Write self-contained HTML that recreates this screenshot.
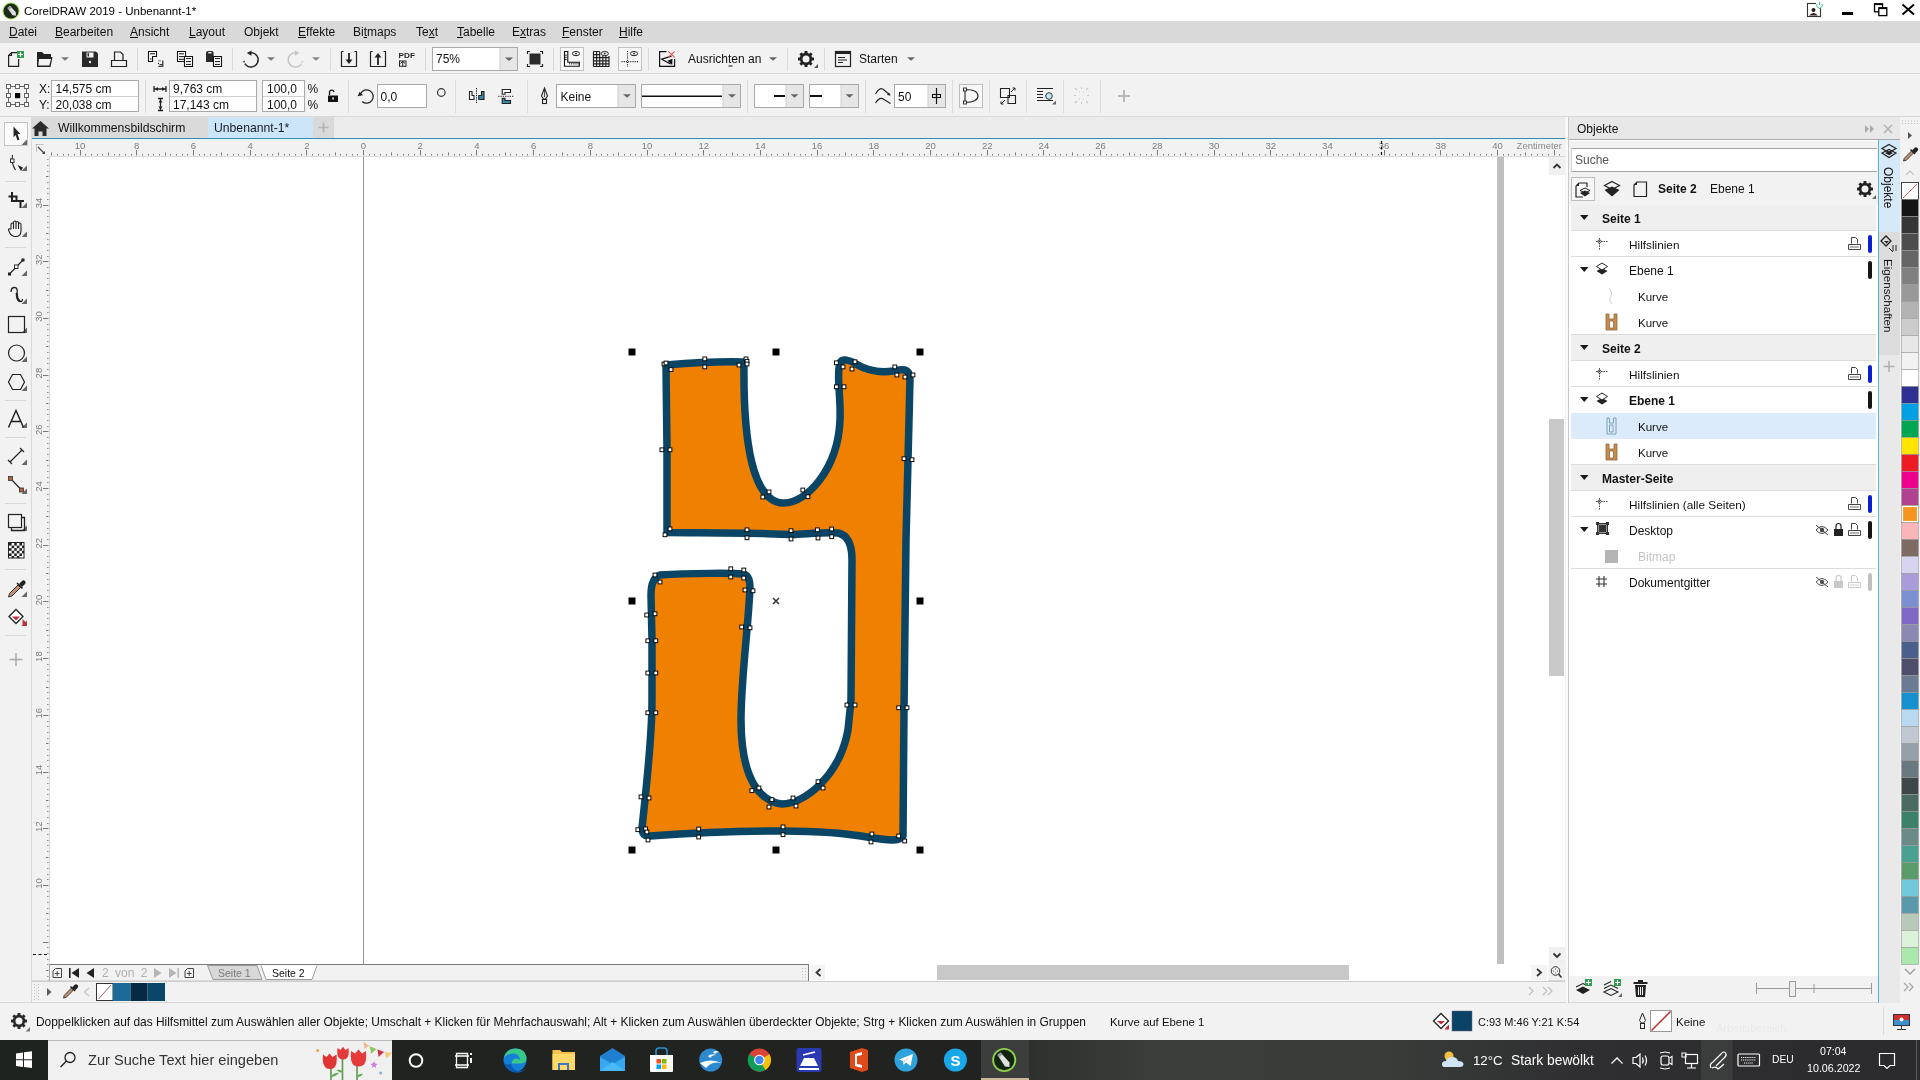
<!DOCTYPE html>
<html><head><meta charset="utf-8">
<style>
*{margin:0;padding:0;box-sizing:border-box}
html,body{width:1920px;height:1080px;overflow:hidden;background:#f2f2f2;font-family:"Liberation Sans",sans-serif;color:#1a1a1a}
.a{position:absolute}
svg{will-change:transform}
.t{position:absolute;white-space:nowrap;font-size:12px;line-height:14px;will-change:transform}
</style></head><body>
<!-- TITLE BAR -->
<div class="a" style="left:0;top:0;width:1920px;height:21px;background:#fff"></div>
<!-- MENU BAR -->
<div class="a" style="left:0;top:21px;width:1920px;height:22px;background:#d9d9d9"></div>
<!-- STANDARD TOOLBAR -->
<div class="a" style="left:0;top:43px;width:1920px;height:31px;background:#f2f2f2;border-bottom:1px solid #d6d6d6"></div>
<!-- PROPERTY BAR -->
<div class="a" style="left:0;top:74px;width:1920px;height:43px;background:#f2f2f2;border-bottom:1px solid #d9d9d9"></div>
<!-- TOOLBOX -->
<div class="a" style="left:0;top:117px;width:31px;height:886px;background:#f2f2f2"></div>
<!-- TAB BAR -->
<div class="a" style="left:31px;top:117px;width:1534px;height:21px;background:#ebebeb"></div>
<div class="a" style="left:31px;top:138px;width:1534px;height:1px;background:#4aa3c6"></div>
<!-- RULERS -->
<div class="a" style="left:31px;top:139px;width:1534px;height:17px;background:#f2f2f2"></div>
<div class="a" style="left:31px;top:139px;width:19px;height:841px;background:#f2f2f2"></div>
<!-- CANVAS -->
<div class="a" style="left:50px;top:156px;width:1498px;height:808px;background:#fff"></div>
<div class="a" style="left:363px;top:156px;width:1px;height:808px;background:#959595"></div>
<div class="a" style="left:1497px;top:156px;width:7px;height:808px;background:#bfbfbf"></div>
<!-- VSCROLL -->
<div class="a" style="left:1548px;top:156px;width:17px;height:808px;background:#fff"></div>
<div class="a" style="left:1549px;top:419px;width:15px;height:257px;background:#c8c8c8"></div><div class="a" style="left:1549px;top:157px;width:16px;height:18px;background:#f0f0f0"></div><svg class="a" style="left:1549px;top:157px" width="16" height="18"><path d="M4.5 11 L8 7.5 L11.5 11" fill="none" stroke="#333" stroke-width="1.8"/></svg>
<!-- PAGE NAV -->
<div class="a" style="left:50px;top:964px;width:1515px;height:17px;background:#f2f2f2"></div>

<!-- DOC PALETTE -->
<div class="a" style="left:31px;top:980px;width:1534px;height:22px;background:#f2f2f2;border-top:1px solid #dadada"></div>
<!-- STATUS BAR -->
<div class="a" style="left:0;top:1002px;width:1920px;height:38px;background:#f2f2f2;border-top:1px solid #d9d9d9"></div>
<!-- TASKBAR -->

<!-- DOCKER -->
<div class="a" style="left:1567px;top:117px;width:1px;height:886px;background:#d0d0d0"></div>
<div class="a" style="left:1568px;top:117px;width:310px;height:886px;background:#fff"></div>
<!-- DOCKER TABS -->
<div class="a" style="left:1878px;top:117px;width:22px;height:886px;background:#e8e8e8"></div>
<!-- PALETTE -->
<div class="a" style="left:1900px;top:117px;width:20px;height:886px;background:#f2f2f2"></div>

<!-- ===== TITLE ===== -->
<svg class="a" style="left:2px;top:2px" width="18" height="18" viewBox="0 0 18 18"><circle cx="9" cy="9" r="8.5" fill="#9bd84a"/><circle cx="9" cy="9" r="7.5" fill="#1d2a17"/><path d="M5.5 6 L8 3.8 L14 10.5 L13.8 13.8 L10.5 13.2 Z" fill="#dcdcdc"/><path d="M5.5 6 L8 3.8 L9.5 5.5 L7 7.7Z" fill="#9a9a9a"/></svg>
<div class="t" style="left:24px;top:4px;font-size:11.5px;color:#000">CorelDRAW 2019 - Unbenannt-1*</div>
<svg class="a" style="left:1800px;top:0" width="120" height="21" viewBox="1800 0 120 21">
<rect x="1807.5" y="3.5" width="13" height="13" fill="#fff" stroke="#333" stroke-width="1.1"/>
<circle cx="1813.5" cy="10" r="2" fill="#2a1a1a"/><path d="M1809 15.5 Q1813.5 10.5 1818 15.5Z" fill="#2a1a1a"/>
<rect x="1816" y="1" width="7" height="7" fill="#fff"/><path d="M1817.2 3.8 A2.8 2.8 0 1 0 1821.8 3.8" fill="none" stroke="#4cc08a" stroke-width="1"/><path d="M1819.5 1.8 V5" stroke="#4cc08a" stroke-width="1"/>
<rect x="1842" y="12" width="11" height="3" fill="#000"/>
<rect x="1874.5" y="3.8" width="8" height="8" fill="none" stroke="#000" stroke-width="1.3"/><rect x="1874.5" y="3.5" width="8" height="1.6" fill="#000"/>
<rect x="1878.8" y="7.8" width="8" height="7.8" fill="#fff" stroke="#000" stroke-width="1.3"/><rect x="1878.8" y="7.5" width="8" height="1.6" fill="#000"/>
<path d="M1902.5 4.5 L1914 14.5 M1914 4.5 L1902.5 14.5" stroke="#000" stroke-width="1.9"/>
</svg>
<!-- ===== MENU ===== -->
<div class="t" style="left:9px;top:25px;color:#111"><u>D</u>atei</div>
<div class="t" style="left:55px;top:25px;color:#111"><u>B</u>earbeiten</div>
<div class="t" style="left:130px;top:25px;color:#111"><u>A</u>nsicht</div>
<div class="t" style="left:189px;top:25px;color:#111"><u>L</u>ayout</div>
<div class="t" style="left:244px;top:25px;color:#111">Ob<u>j</u>ekt</div>
<div class="t" style="left:298px;top:25px;color:#111"><u>E</u>ffekte</div>
<div class="t" style="left:353px;top:25px;color:#111">Bi<u>t</u>maps</div>
<div class="t" style="left:416px;top:25px;color:#111">Te<u>x</u>t</div>
<div class="t" style="left:457px;top:25px;color:#111"><u>T</u>abelle</div>
<div class="t" style="left:512px;top:25px;color:#111">E<u>x</u>tras</div>
<div class="t" style="left:562px;top:25px;color:#111"><u>F</u>enster</div>
<div class="t" style="left:619px;top:25px;color:#111"><u>H</u>ilfe</div>

<!-- ===== STANDARD TOOLBAR ===== -->
<svg class="a" style="left:0;top:43px" width="940" height="31" viewBox="0 43 940 31">
<g fill="none" stroke="#222" stroke-width="1.2">
<!-- new -->
<path d="M8.6 55.5 L11.5 52.6 H17.5 M18.6 59 V66.4 H8.6 V55.5 H11.5 V52.6"/>
</g>
<rect x="17" y="51" width="7" height="7" fill="#2f9e4f"/><path d="M20.5 52.2 V56.8 M18.2 54.5 H22.8" stroke="#fff" stroke-width="1.2"/>
<!-- open -->
<path d="M37 52 H42 L44 54 H51 V57 H52.5 L50.5 67 H37 Z" fill="#222"/><path d="M39 59 H51 L49.3 65.5 H38.3 Z" fill="#f2f2f2"/>
<path d="M61 57.3 H69 L65 60.8Z" fill="#777"/>
<!-- save -->
<path d="M82 51.5 H96 L98 53.5 V67 H82 Z" fill="#2a2a2a"/><rect x="86.5" y="52.5" width="7" height="5" fill="#f2f2f2"/><rect x="87.5" y="53.2" width="1.5" height="3.3" fill="#2a2a2a"/><circle cx="90" cy="62" r="1.2" fill="#f2f2f2"/>
<!-- print -->
<path d="M114.5 60.5 V52 H120.5 L123 54.5 V60.5 M111.5 60.5 H126.5 V66.5 H111.5 Z" fill="none" stroke="#222" stroke-width="1.2"/>
<rect x="137" y="48" width="1" height="23" fill="#dadada"/>
<!-- cut-ish -->
<path d="M148.5 61.5 V51.5 H156.5 V56.5 H152.5 V61.5 Z" fill="#fff" stroke="#111" stroke-width="1.1"/><path d="M150 53.8 H155 M150 59 H151.5" stroke="#111" stroke-width="1"/>
<path d="M162.8 60.5 V66.3 H158.3" fill="none" stroke="#111" stroke-width="1.1"/><path d="M158.5 60.8 H161 M158.5 63 V64" stroke="#111" stroke-width="1" stroke-dasharray="1 1"/><path d="M159.5 64.6 H162" stroke="#111" stroke-width="0.9"/>
<!-- copy -->
<path d="M177.5 51.5 H185.5 V61.5 H177.5Z" fill="#fff" stroke="#111" stroke-width="1.1"/><path d="M179 53.8 H184 M179 56.6 H184 M179 59.3 H184" stroke="#111" stroke-width="1"/>
<path d="M184.5 56.5 H192.5 V66.5 H184.5Z" fill="#fff" stroke="#111" stroke-width="1.1"/><path d="M186 58.6 H191 M186 61.6 H191 M186 64.4 H191" stroke="#111" stroke-width="1"/>
<!-- paste -->
<path d="M206 53 Q206 51 208 51 H211.8 Q213.6 51 213.6 53 V62 H206Z" fill="#2a2a2a"/><rect x="208.2" y="52" width="3.4" height="1.4" fill="#eee"/>
<path d="M213.5 56.5 H221.5 V66.5 H213.5Z" fill="#fff" stroke="#111" stroke-width="1.1"/><path d="M215 58.6 H220 M215 61.6 H220 M215 64.4 H220" stroke="#111" stroke-width="1"/>
<rect x="232" y="48" width="1" height="23" fill="#dadada"/>
<!-- undo -->
<path d="M251 52.6 A7.2 7.2 0 1 1 245.9 64.9" fill="none" stroke="#222" stroke-width="1.4"/><path d="M245.9 64.9 A7.2 7.2 0 0 1 243.8 59.8" fill="none" stroke="#222" stroke-width="1.4" stroke-dasharray="1.6 1.3"/>
<path d="M251.5 50.4 L246.8 53.1 L251.5 55.8 Z" fill="#222"/>
<path d="M267 57.3 H275 L271 60.8Z" fill="#777"/>
<!-- redo (disabled) -->
<path d="M295.4 52.6 A7.2 7.2 0 1 0 300.5 64.9" fill="none" stroke="#c4c4c4" stroke-width="1.4"/><path d="M300.5 64.9 A7.2 7.2 0 0 0 302.6 59.8" fill="none" stroke="#c4c4c4" stroke-width="1.4" stroke-dasharray="1.6 1.3"/>
<path d="M294.9 50.4 L299.6 53.1 L294.9 55.8 Z" fill="#c4c4c4"/>
<path d="M312 57.3 H320 L316 60.8Z" fill="#888"/>
<rect x="330" y="48" width="1" height="23" fill="#dadada"/>
<!-- import -->
<path d="M341.5 51.5 H343.5 M341.5 51.5 V66.5 H356.5 V51.5 H354.5" fill="none" stroke="#222" stroke-width="1.2"/><path d="M349 53 V62" stroke="#222" stroke-width="1.8"/><path d="M345.5 59.5 H352.5 L349 64Z" fill="#222"/>
<!-- export -->
<path d="M370.5 51.5 H372.5 M370.5 51.5 V66.5 H385.5 V51.5 H383.5" fill="none" stroke="#222" stroke-width="1.2"/><path d="M378 56 V65" stroke="#222" stroke-width="1.8"/><path d="M374.5 57.5 H381.5 L378 53Z" fill="#222"/>
<!-- pdf -->
<text x="398.6" y="57.6" font-family="Liberation Sans" font-size="7.4" font-weight="bold" fill="#222" textLength="16.4" lengthAdjust="spacingAndGlyphs">PDF</text>
<rect x="399.5" y="61" width="6.5" height="5.3" fill="none" stroke="#222" stroke-width="1"/><path d="M400.5 63.5 L402.75 61.3 L405 63.5 M402.75 62 V66" stroke="#222" stroke-width="1" fill="none"/>
<rect x="425" y="48" width="1" height="23" fill="#dadada"/>
<!-- zoom combo -->
<rect x="432.5" y="47.5" width="85" height="23" fill="#fff" stroke="#a9a9a9"/><rect x="500" y="48" width="17" height="22" fill="#e6e6e6"/><rect x="499.5" y="48" width="1" height="22" fill="#cfcfcf"/>
<path d="M505 57.5 H513 L509 61Z" fill="#666"/>
<text x="436" y="63" font-family="Liberation Sans" font-size="12" fill="#111">75%</text>
<!-- full screen -->
<path d="M527.5 54 V51.5 H530 M540 51.5 H542.5 V54 M542.5 64 V66.5 H540 M530 66.5 H527.5 V64" fill="none" stroke="#222" stroke-width="1.2"/><rect x="529.5" y="53.5" width="11" height="11" fill="#2a2a2a"/>
<rect x="553" y="48" width="1" height="23" fill="#dadada"/>
<!-- rulers (pressed) -->
<rect x="560.5" y="47.5" width="23" height="23" fill="#f7f7f7" stroke="#c2c2c2"/>
<path d="M564.5 51.5 H567.8 V62.2 H579.3 V66.3 H564.5 Z" fill="#fff" stroke="#111" stroke-width="1.1"/>
<path d="M565 55.2 H566.8 M565 57.3 H566.8 M565 59.4 H566.8 M569.7 62.7 V64.5 M571.8 62.7 V64.5 M573.9 62.7 V64.5 M576 62.7 V64.5 M578.1 62.7 V64.5" stroke="#111" stroke-width="0.9"/>
<ellipse cx="576" cy="53.6" rx="3.6" ry="2.1" fill="none" stroke="#222" stroke-width="1"/><circle cx="576" cy="53.6" r="0.9" fill="#222"/>
<!-- grid -->
<path d="M593.5 51.5 V66.5 M596.6 51.5 V66.5 M599.7 51.5 V66.5 M602.8 56 V66.5 M605.9 56 V66.5 M609 56 V66.5 M593.5 51.5 H599.7 M593.5 54.6 H599.7 M593.5 57.7 H609 M593.5 60.8 H609 M593.5 63.9 H609 M593.5 66.5 H609" stroke="#222" stroke-width="1.2"/>
<ellipse cx="604.8" cy="53.6" rx="3.6" ry="2.1" fill="#f2f2f2" stroke="#222" stroke-width="1"/><circle cx="604.8" cy="53.6" r="0.9" fill="#222"/>
<!-- guides (pressed) -->
<rect x="618.5" y="47.5" width="23" height="23" fill="#f7f7f7" stroke="#c2c2c2"/>
<path d="M627.5 51 V67" stroke="#111" stroke-width="1.1" stroke-dasharray="1 1.2"/><path d="M621.5 61.6 H638.5" stroke="#111" stroke-width="1.1" stroke-dasharray="1 1.2"/>
<ellipse cx="634" cy="53.6" rx="3.6" ry="2.1" fill="none" stroke="#222" stroke-width="1"/><circle cx="634" cy="53.6" r="0.9" fill="#222"/>
<rect x="648" y="48" width="1" height="23" fill="#dadada"/>
<!-- snap off -->
<path d="M666.5 51.6 H659.6 V66.3 H674.6 V59" fill="none" stroke="#111" stroke-width="1.2"/>
<path d="M671.5 56.2 L661.8 59.2 L670.5 64" fill="none" stroke="#111" stroke-width="1.3"/><path d="M667.5 60.8 L672.5 58.8 L672.2 65 Z" fill="#111"/>
<path d="M668.3 51.3 L674.7 57.3 M674.7 51.3 L668.3 57.3" stroke="#e05555" stroke-width="1.1"/>
<text x="688" y="63" font-family="Liberation Sans" font-size="12" fill="#111">Ausrichten an</text><rect x="728.5" y="65.5" width="4" height="1" fill="#111"/>
<path d="M769 57.3 H777 L773 60.8Z" fill="#666"/>
<rect x="787" y="48" width="1" height="23" fill="#dadada"/>
<!-- gear -->
<g transform="translate(806 59)"><g fill="#222"><rect x="-1.5" y="-8" width="3" height="16" rx="0.6"/><rect x="-1.5" y="-8" width="3" height="16" rx="0.6" transform="rotate(45)"/><rect x="-1.5" y="-8" width="3" height="16" rx="0.6" transform="rotate(90)"/><rect x="-1.5" y="-8" width="3" height="16" rx="0.6" transform="rotate(135)"/><circle r="6.2"/></g><circle r="3.5" fill="#f2f2f2"/></g>
<path d="M814 68 L818 64 V68Z" fill="#555"/>
<rect x="824" y="48" width="1" height="23" fill="#dadada"/>
<!-- starten -->
<rect x="835.5" y="51.5" width="15" height="15" fill="none" stroke="#222" stroke-width="1.2"/><rect x="835.5" y="51.5" width="15" height="2.5" fill="#222"/><path d="M838 57.5 H845 M838 60 H847 M838 62.5 H843" stroke="#222" stroke-width="1"/>
<text x="859" y="63" font-family="Liberation Sans" font-size="12" fill="#111">Starten</text>
<path d="M907 57.3 H915 L911 60.8Z" fill="#666"/>
</svg>

<!-- ===== PROPERTY BAR ===== -->
<svg class="a" style="left:0;top:74px" width="1140" height="43" viewBox="0 74 1140 43">
<!-- anchor grid -->
<g fill="#fff" stroke="#555" stroke-width="0.9">
<rect x="6.5" y="84.5" width="4" height="4"/><rect x="15.5" y="84.5" width="4" height="4"/><rect x="24.5" y="84.5" width="4" height="4"/>
<rect x="6.5" y="93.5" width="4" height="4"/><rect x="24.5" y="93.5" width="4" height="4"/>
<rect x="6.5" y="102.5" width="4" height="4"/><rect x="15.5" y="102.5" width="4" height="4"/><rect x="24.5" y="102.5" width="4" height="4"/>
<path d="M10.5 86.5 H15.5 M19.5 86.5 H24.5 M10.5 104.5 H15.5 M19.5 104.5 H24.5 M8.5 88.5 V93.5 M8.5 97.5 V102.5 M26.5 88.5 V93.5 M26.5 97.5 V102.5" fill="none"/>
</g>
<rect x="15" y="93" width="5.2" height="5.2" fill="#000"/>
<text x="39" y="93" font-family="Liberation Sans" font-size="12" fill="#111">X:</text>
<text x="39" y="108.5" font-family="Liberation Sans" font-size="12" fill="#111">Y:</text>
<rect x="51.5" y="80.5" width="87" height="31" fill="#fff" stroke="#a9a9a9"/><rect x="52" y="96" width="86" height="1" fill="#cfcfcf"/>
<text x="55.5" y="93" font-family="Liberation Sans" font-size="12" fill="#111">14,575 cm</text>
<text x="55.5" y="108.5" font-family="Liberation Sans" font-size="12" fill="#111">20,038 cm</text>
<rect x="145" y="80" width="1" height="33" fill="#dcdcdc"/>
<!-- W/H icons -->
<path d="M154 86 V92 M166 86 V92 M154 89 H166" stroke="#222" stroke-width="1.3"/><path d="M155 89 L158 87 V91Z M165 89 L162 87 V91Z" fill="#222"/>
<path d="M158 98.5 H163 M158 110.5 H163 M160.5 98.5 V110.5" stroke="#222" stroke-width="1.3"/><path d="M160.5 99.5 L158.5 102.5 H162.5Z M160.5 109.5 L158.5 106.5 H162.5Z" fill="#222"/>
<rect x="169.5" y="80.5" width="87" height="31" fill="#fff" stroke="#a9a9a9"/><rect x="170" y="96" width="86" height="1" fill="#cfcfcf"/>
<text x="173" y="93" font-family="Liberation Sans" font-size="12" fill="#111">9,763 cm</text>
<text x="173" y="108.5" font-family="Liberation Sans" font-size="12" fill="#111">17,143 cm</text>
<rect x="262.5" y="80.5" width="42" height="31" fill="#fff" stroke="#a9a9a9"/><rect x="263" y="96" width="41" height="1" fill="#cfcfcf"/>
<text x="267" y="93" font-family="Liberation Sans" font-size="12" fill="#111">100,0</text>
<text x="267" y="108.5" font-family="Liberation Sans" font-size="12" fill="#111">100,0</text>
<text x="307.5" y="93" font-family="Liberation Sans" font-size="12" fill="#111">%</text>
<text x="307.5" y="108.5" font-family="Liberation Sans" font-size="12" fill="#111">%</text>
<!-- lock -->
<path d="M329.5 95 V92 A2.3 2.3 0 0 1 334 92" fill="none" stroke="#111" stroke-width="1.3"/><rect x="328" y="95.5" width="10" height="6.5" fill="#111"/><rect x="332.3" y="97.5" width="1.5" height="2" fill="#fff"/>
<rect x="348" y="80" width="1" height="33" fill="#dcdcdc"/>
<!-- rotate -->
<path d="M360.6 93.8 A6.6 6.6 0 1 1 362.2 101.4" fill="none" stroke="#222" stroke-width="1.3"/><path d="M357.6 96.3 L359.6 91.8 L363 95.3Z" fill="#222"/>
<rect x="377.5" y="84.5" width="49" height="23" fill="#fff" stroke="#a9a9a9"/>
<text x="380.5" y="100.5" font-family="Liberation Sans" font-size="12" fill="#111">0,0</text>
<circle cx="441.3" cy="92.5" r="3.8" fill="none" stroke="#333" stroke-width="1.2"/>
<rect x="455" y="80" width="1" height="33" fill="#dcdcdc"/>
<!-- mirror h -->
<path d="M469.5 91.5 V99.5 H474 V95.5 H472 V91.5 Z" fill="#fff" stroke="#222" stroke-width="1.1"/>
<path d="M476.5 88 V103.5" stroke="#222" stroke-width="1" stroke-dasharray="1.3 1"/>
<path d="M478.8 99.5 H484 V91.5 H481.5 V95.5 H478.8 Z" fill="#3d87a8" stroke="#222" stroke-width="1.1"/>
<!-- mirror v -->
<path d="M502.2 89.5 H510.5 V92.5 H505 V94.2 H502.2 Z" fill="#fff" stroke="#222" stroke-width="1.1"/>
<path d="M498.2 96.3 H514" stroke="#222" stroke-width="1" stroke-dasharray="1.3 1"/>
<path d="M502.2 98.2 H505 V100.5 H510.5 V103.5 H502.2 Z" fill="#3d87a8" stroke="#222" stroke-width="1.1"/>
<rect x="527" y="80" width="1" height="33" fill="#dcdcdc"/>
<!-- pen -->
<path d="M544.5 88 L547.5 96 L545.5 99 H543.5 L541.5 96 Z" fill="none" stroke="#222" stroke-width="1.1"/><rect x="542.5" y="99.5" width="4" height="4" fill="none" stroke="#222" stroke-width="1.1"/><path d="M544.5 89 V97" stroke="#222" stroke-width="0.8"/>
<rect x="556.5" y="84.5" width="79" height="23" fill="#fff" stroke="#a9a9a9"/><rect x="618" y="85" width="17" height="22" fill="#e6e6e6"/><rect x="617.5" y="85" width="1" height="22" fill="#cfcfcf"/>
<path d="M623 94.3 H631 L627 97.8Z" fill="#666"/>
<text x="560.5" y="100.5" font-family="Liberation Sans" font-size="12" fill="#111">Keine</text>
<rect x="641.5" y="84.5" width="99" height="23" fill="#fff" stroke="#a9a9a9"/><rect x="723" y="85" width="17" height="22" fill="#e6e6e6"/><rect x="722.5" y="85" width="1" height="22" fill="#cfcfcf"/>
<path d="M728 94.3 H736 L732 97.8Z" fill="#666"/>
<rect x="642" y="95.5" width="80" height="1.5" fill="#111"/>
<rect x="747" y="80" width="1" height="33" fill="#dcdcdc"/>
<rect x="754.5" y="84.5" width="49" height="23" fill="#fff" stroke="#a9a9a9"/><rect x="786" y="85" width="17" height="22" fill="#e6e6e6"/><rect x="785.5" y="85" width="1" height="22" fill="#cfcfcf"/>
<path d="M790.5 94.3 H798.5 L794.5 97.8Z" fill="#666"/>
<rect x="774" y="95" width="11" height="2" fill="#111"/>
<rect x="809.5" y="84.5" width="49" height="23" fill="#fff" stroke="#a9a9a9"/><rect x="841" y="85" width="17" height="22" fill="#e6e6e6"/><rect x="840.5" y="85" width="1" height="22" fill="#cfcfcf"/>
<path d="M845.5 94.3 H853.5 L849.5 97.8Z" fill="#666"/>
<rect x="810" y="95" width="12" height="2" fill="#111"/>
<rect x="865" y="80" width="1" height="33" fill="#dcdcdc"/>
<!-- smoothing -->
<path d="M875.5 94 Q880 86 884 90 L890 95 M875.5 103 Q880 96 884 99.5 L890.5 103.5" fill="none" stroke="#222" stroke-width="1.1"/><path d="M890.5 95.5 L887 95 L889 92.5Z" fill="#222"/>
<rect x="894.5" y="84.5" width="51" height="23" fill="#fff" stroke="#a9a9a9"/><rect x="928" y="85" width="17" height="22" fill="#e6e6e6"/><rect x="927.5" y="85" width="1" height="22" fill="#cfcfcf"/>
<text x="898" y="100.5" font-family="Liberation Sans" font-size="12" fill="#111">50</text>
<path d="M936.5 88 V104" stroke="#111" stroke-width="1.2"/><rect x="932.5" y="94.5" width="8" height="3" fill="none" stroke="#111" stroke-width="1.1"/>
<rect x="952" y="80" width="1" height="33" fill="#dcdcdc"/>
<!-- closed curve pressed -->
<rect x="959.5" y="84.5" width="23" height="23" fill="#f7f7f7" stroke="#bdbdbd"/>
<path d="M965 89.5 Q978 89.5 978 96 Q978 102 965 102.5 Z" fill="none" stroke="#222" stroke-width="1.1"/><rect x="963.5" y="88" width="3" height="3" fill="#fff" stroke="#222" stroke-width="0.9"/><rect x="963.5" y="101" width="3" height="3" fill="#fff" stroke="#222" stroke-width="0.9"/>
<rect x="989" y="80" width="1" height="33" fill="#dcdcdc"/>
<!-- transform -->
<path d="M1000.5 88.5 H1009.5 V97.5 H1000.5Z M1008 95.5 H1015.5 V103.5 H1008Z" fill="none" stroke="#222" stroke-width="1.1"/><path d="M1011 92 L1015 88 M1015 88 H1012.5 M1015 88 V90.5 M1005 100 L1001 104 M1001 104 H1003.5 M1001 104 V101.5" stroke="#222" stroke-width="1"/>
<rect x="1026" y="80" width="1" height="33" fill="#dcdcdc"/>
<!-- wrap -->
<path d="M1037 88.5 H1053 M1037 91.5 H1043 M1037 94.5 H1043 M1037 97.5 H1043 M1037 100.5 H1053" stroke="#222" stroke-width="1.1"/><circle cx="1049" cy="96" r="3.3" fill="#bfe8f5" stroke="#222" stroke-width="0.9"/><path d="M1052 104.5 L1056 100.5 V104.5Z" fill="#666"/>
<rect x="1063" y="80" width="1" height="33" fill="#dcdcdc"/>
<!-- disabled -->
<g stroke="#c8c8c8" stroke-width="1.1"><path d="M1075 88 L1077 90 M1088 88 L1086 90 M1075 103 L1077 101 M1088 103 L1086 101 M1081.5 87 V89 M1081.5 102 V104 M1074 95.5 H1076 M1087 95.5 H1089"/><path d="M1079 92 H1080 M1083 92 H1084 M1079 99 H1080 M1083 99 H1084"/></g>
<rect x="1100" y="80" width="1" height="33" fill="#dcdcdc"/>
<path d="M1124 90 V102 M1118 96 H1130" stroke="#a8a8a8" stroke-width="1.5"/>
</svg>
<!-- ===== TAB BAR / RULERS ===== -->
<div class="a" style="left:32px;top:117px;width:176px;height:21px;background:#dadada"></div>
<div class="a" style="left:208px;top:117px;width:105px;height:21px;background:#cde5f9"></div>
<div class="a" style="left:313px;top:117px;width:21px;height:21px;background:#d9d9d9"></div>
<div class="a" style="left:32px;top:138px;width:1533px;height:1px;background:#3a8aac"></div>
<div class="a" style="left:32px;top:139px;width:1533px;height:2px;background:#e3f6fb"></div>
<svg class="a" style="left:32px;top:120px" width="18" height="17" viewBox="0 0 18 17"><path d="M8.5 1 L17 8.5 H14.5 V16 H10.5 V11.5 H6.5 V16 H2.5 V8.5 H0 Z" fill="#2b2b2b"/></svg>
<div class="t" style="left:58px;top:121px;font-size:12.2px;color:#111">Willkommensbildschirm</div>
<div class="t" style="left:214px;top:121px;font-size:12.2px;color:#161c26">Unbenannt-1*</div>
<svg class="a" style="left:313px;top:117px" width="21" height="21"><path d="M10.5 5.5 V15.5 M5.5 10.5 H15.5" stroke="#b3b3b3" stroke-width="1.6"/></svg>
<div class="a" style="left:50px;top:156px;width:1515px;height:1px;background:#d9d9d9"></div>
<div class="a" style="left:49px;top:156px;width:1px;height:808px;background:#d9d9d9"></div>
<div class="a" style="left:31px;top:117px;width:1px;height:886px;background:#d9d9d9"></div>
<svg class="a" style="left:0;top:0" width="1565" height="1003" viewBox="0 0 1565 1003">
<path d="M38 147 L44 153" stroke="#444" stroke-width="1.3"/><path d="M42 154 L45 151 L45 154Z" fill="#444"/><path d="M36.5 144.5 H44 M36.5 144.5 V152" stroke="#888" stroke-width="0.9" stroke-dasharray="1 1"/>
<path d="M51.5 152.5 V155.5 M57.5 154 V155.5 M63.5 154 V155.5 M68.5 154 V155.5 M74.5 154 V155.5 M80.5 150 V155.5 M85.5 154 V155.5 M91.5 154 V155.5 M97.5 154 V155.5 M102.5 154 V155.5 M108.5 152.5 V155.5 M114.5 154 V155.5 M119.5 154 V155.5 M125.5 154 V155.5 M131.5 154 V155.5 M136.5 150 V155.5 M142.5 154 V155.5 M148.5 154 V155.5 M153.5 154 V155.5 M159.5 154 V155.5 M165.5 152.5 V155.5 M170.5 154 V155.5 M176.5 154 V155.5 M182.5 154 V155.5 M187.5 154 V155.5 M193.5 150 V155.5 M199.5 154 V155.5 M204.5 154 V155.5 M210.5 154 V155.5 M216.5 154 V155.5 M221.5 152.5 V155.5 M227.5 154 V155.5 M233.5 154 V155.5 M238.5 154 V155.5 M244.5 154 V155.5 M250.5 150 V155.5 M255.5 154 V155.5 M261.5 154 V155.5 M267.5 154 V155.5 M272.5 154 V155.5 M278.5 152.5 V155.5 M284.5 154 V155.5 M289.5 154 V155.5 M295.5 154 V155.5 M301.5 154 V155.5 M306.5 150 V155.5 M312.5 154 V155.5 M318.5 154 V155.5 M323.5 154 V155.5 M329.5 154 V155.5 M335.5 152.5 V155.5 M340.5 154 V155.5 M346.5 154 V155.5 M352.5 154 V155.5 M357.5 154 V155.5 M363.5 150 V155.5 M369.5 154 V155.5 M374.5 154 V155.5 M380.5 154 V155.5 M386.5 154 V155.5 M391.5 152.5 V155.5 M397.5 154 V155.5 M403.5 154 V155.5 M408.5 154 V155.5 M414.5 154 V155.5 M420.5 150 V155.5 M425.5 154 V155.5 M431.5 154 V155.5 M437.5 154 V155.5 M442.5 154 V155.5 M448.5 152.5 V155.5 M454.5 154 V155.5 M459.5 154 V155.5 M465.5 154 V155.5 M471.5 154 V155.5 M476.5 150 V155.5 M482.5 154 V155.5 M488.5 154 V155.5 M493.5 154 V155.5 M499.5 154 V155.5 M505.5 152.5 V155.5 M510.5 154 V155.5 M516.5 154 V155.5 M522.5 154 V155.5 M527.5 154 V155.5 M533.5 150 V155.5 M539.5 154 V155.5 M544.5 154 V155.5 M550.5 154 V155.5 M556.5 154 V155.5 M562.5 152.5 V155.5 M567.5 154 V155.5 M573.5 154 V155.5 M579.5 154 V155.5 M584.5 154 V155.5 M590.5 150 V155.5 M596.5 154 V155.5 M601.5 154 V155.5 M607.5 154 V155.5 M613.5 154 V155.5 M618.5 152.5 V155.5 M624.5 154 V155.5 M630.5 154 V155.5 M635.5 154 V155.5 M641.5 154 V155.5 M647.5 150 V155.5 M652.5 154 V155.5 M658.5 154 V155.5 M664.5 154 V155.5 M669.5 154 V155.5 M675.5 152.5 V155.5 M681.5 154 V155.5 M686.5 154 V155.5 M692.5 154 V155.5 M698.5 154 V155.5 M703.5 150 V155.5 M709.5 154 V155.5 M715.5 154 V155.5 M720.5 154 V155.5 M726.5 154 V155.5 M732.5 152.5 V155.5 M737.5 154 V155.5 M743.5 154 V155.5 M749.5 154 V155.5 M754.5 154 V155.5 M760.5 150 V155.5 M766.5 154 V155.5 M771.5 154 V155.5 M777.5 154 V155.5 M783.5 154 V155.5 M788.5 152.5 V155.5 M794.5 154 V155.5 M800.5 154 V155.5 M805.5 154 V155.5 M811.5 154 V155.5 M817.5 150 V155.5 M822.5 154 V155.5 M828.5 154 V155.5 M834.5 154 V155.5 M839.5 154 V155.5 M845.5 152.5 V155.5 M851.5 154 V155.5 M856.5 154 V155.5 M862.5 154 V155.5 M868.5 154 V155.5 M873.5 150 V155.5 M879.5 154 V155.5 M885.5 154 V155.5 M890.5 154 V155.5 M896.5 154 V155.5 M902.5 152.5 V155.5 M907.5 154 V155.5 M913.5 154 V155.5 M919.5 154 V155.5 M924.5 154 V155.5 M930.5 150 V155.5 M936.5 154 V155.5 M941.5 154 V155.5 M947.5 154 V155.5 M953.5 154 V155.5 M958.5 152.5 V155.5 M964.5 154 V155.5 M970.5 154 V155.5 M975.5 154 V155.5 M981.5 154 V155.5 M987.5 150 V155.5 M992.5 154 V155.5 M998.5 154 V155.5 M1004.5 154 V155.5 M1009.5 154 V155.5 M1015.5 152.5 V155.5 M1021.5 154 V155.5 M1026.5 154 V155.5 M1032.5 154 V155.5 M1038.5 154 V155.5 M1043.5 150 V155.5 M1049.5 154 V155.5 M1055.5 154 V155.5 M1060.5 154 V155.5 M1066.5 154 V155.5 M1072.5 152.5 V155.5 M1077.5 154 V155.5 M1083.5 154 V155.5 M1089.5 154 V155.5 M1094.5 154 V155.5 M1100.5 150 V155.5 M1106.5 154 V155.5 M1111.5 154 V155.5 M1117.5 154 V155.5 M1123.5 154 V155.5 M1129.5 152.5 V155.5 M1134.5 154 V155.5 M1140.5 154 V155.5 M1146.5 154 V155.5 M1151.5 154 V155.5 M1157.5 150 V155.5 M1163.5 154 V155.5 M1168.5 154 V155.5 M1174.5 154 V155.5 M1180.5 154 V155.5 M1185.5 152.5 V155.5 M1191.5 154 V155.5 M1197.5 154 V155.5 M1202.5 154 V155.5 M1208.5 154 V155.5 M1214.5 150 V155.5 M1219.5 154 V155.5 M1225.5 154 V155.5 M1231.5 154 V155.5 M1236.5 154 V155.5 M1242.5 152.5 V155.5 M1248.5 154 V155.5 M1253.5 154 V155.5 M1259.5 154 V155.5 M1265.5 154 V155.5 M1270.5 150 V155.5 M1276.5 154 V155.5 M1282.5 154 V155.5 M1287.5 154 V155.5 M1293.5 154 V155.5 M1299.5 152.5 V155.5 M1304.5 154 V155.5 M1310.5 154 V155.5 M1316.5 154 V155.5 M1321.5 154 V155.5 M1327.5 150 V155.5 M1333.5 154 V155.5 M1338.5 154 V155.5 M1344.5 154 V155.5 M1350.5 154 V155.5 M1355.5 152.5 V155.5 M1361.5 154 V155.5 M1367.5 154 V155.5 M1372.5 154 V155.5 M1378.5 154 V155.5 M1384.5 150 V155.5 M1389.5 154 V155.5 M1395.5 154 V155.5 M1401.5 154 V155.5 M1406.5 154 V155.5 M1412.5 152.5 V155.5 M1418.5 154 V155.5 M1423.5 154 V155.5 M1429.5 154 V155.5 M1435.5 154 V155.5 M1440.5 150 V155.5 M1446.5 154 V155.5 M1452.5 154 V155.5 M1457.5 154 V155.5 M1463.5 154 V155.5 M1469.5 152.5 V155.5 M1474.5 154 V155.5 M1480.5 154 V155.5 M1486.5 154 V155.5 M1491.5 154 V155.5 M1497.5 150 V155.5 M1503.5 154 V155.5 M1508.5 154 V155.5 M1514.5 154 V155.5 M1520.5 154 V155.5 M1525.5 152.5 V155.5 M1531.5 154 V155.5 M1537.5 154 V155.5 M1542.5 154 V155.5" stroke="#7a7a7a" stroke-width="1"/>
<text x="80.0" y="148.8" text-anchor="middle" font-family="Liberation Sans" font-size="9.5" fill="#7d7d7d">10</text>
<text x="136.7" y="148.8" text-anchor="middle" font-family="Liberation Sans" font-size="9.5" fill="#7d7d7d">8</text>
<text x="193.4" y="148.8" text-anchor="middle" font-family="Liberation Sans" font-size="9.5" fill="#7d7d7d">6</text>
<text x="250.1" y="148.8" text-anchor="middle" font-family="Liberation Sans" font-size="9.5" fill="#7d7d7d">4</text>
<text x="306.8" y="148.8" text-anchor="middle" font-family="Liberation Sans" font-size="9.5" fill="#7d7d7d">2</text>
<text x="363.5" y="148.8" text-anchor="middle" font-family="Liberation Sans" font-size="9.5" fill="#7d7d7d">0</text>
<text x="420.2" y="148.8" text-anchor="middle" font-family="Liberation Sans" font-size="9.5" fill="#7d7d7d">2</text>
<text x="476.9" y="148.8" text-anchor="middle" font-family="Liberation Sans" font-size="9.5" fill="#7d7d7d">4</text>
<text x="533.6" y="148.8" text-anchor="middle" font-family="Liberation Sans" font-size="9.5" fill="#7d7d7d">6</text>
<text x="590.3" y="148.8" text-anchor="middle" font-family="Liberation Sans" font-size="9.5" fill="#7d7d7d">8</text>
<text x="647.0" y="148.8" text-anchor="middle" font-family="Liberation Sans" font-size="9.5" fill="#7d7d7d">10</text>
<text x="703.7" y="148.8" text-anchor="middle" font-family="Liberation Sans" font-size="9.5" fill="#7d7d7d">12</text>
<text x="760.4" y="148.8" text-anchor="middle" font-family="Liberation Sans" font-size="9.5" fill="#7d7d7d">14</text>
<text x="817.1" y="148.8" text-anchor="middle" font-family="Liberation Sans" font-size="9.5" fill="#7d7d7d">16</text>
<text x="873.8" y="148.8" text-anchor="middle" font-family="Liberation Sans" font-size="9.5" fill="#7d7d7d">18</text>
<text x="930.5" y="148.8" text-anchor="middle" font-family="Liberation Sans" font-size="9.5" fill="#7d7d7d">20</text>
<text x="987.2" y="148.8" text-anchor="middle" font-family="Liberation Sans" font-size="9.5" fill="#7d7d7d">22</text>
<text x="1043.9" y="148.8" text-anchor="middle" font-family="Liberation Sans" font-size="9.5" fill="#7d7d7d">24</text>
<text x="1100.6" y="148.8" text-anchor="middle" font-family="Liberation Sans" font-size="9.5" fill="#7d7d7d">26</text>
<text x="1157.3" y="148.8" text-anchor="middle" font-family="Liberation Sans" font-size="9.5" fill="#7d7d7d">28</text>
<text x="1214.0" y="148.8" text-anchor="middle" font-family="Liberation Sans" font-size="9.5" fill="#7d7d7d">30</text>
<text x="1270.7" y="148.8" text-anchor="middle" font-family="Liberation Sans" font-size="9.5" fill="#7d7d7d">32</text>
<text x="1327.4" y="148.8" text-anchor="middle" font-family="Liberation Sans" font-size="9.5" fill="#7d7d7d">34</text>
<text x="1384.1" y="148.8" text-anchor="middle" font-family="Liberation Sans" font-size="9.5" fill="#7d7d7d">36</text>
<text x="1440.8" y="148.8" text-anchor="middle" font-family="Liberation Sans" font-size="9.5" fill="#7d7d7d">38</text>
<text x="1497.5" y="148.8" text-anchor="middle" font-family="Liberation Sans" font-size="9.5" fill="#7d7d7d">40</text>
<text x="1562" y="148.8" text-anchor="end" font-family="Liberation Sans" font-size="9.5" fill="#8a8a8a">Zentimeter</text>
<text x="0" y="0" transform="translate(41.8 203.0) rotate(-90)" text-anchor="middle" font-family="Liberation Sans" font-size="9.5" fill="#7d7d7d">34</text>
<text x="0" y="0" transform="translate(41.8 259.7) rotate(-90)" text-anchor="middle" font-family="Liberation Sans" font-size="9.5" fill="#7d7d7d">32</text>
<text x="0" y="0" transform="translate(41.8 316.4) rotate(-90)" text-anchor="middle" font-family="Liberation Sans" font-size="9.5" fill="#7d7d7d">30</text>
<text x="0" y="0" transform="translate(41.8 373.1) rotate(-90)" text-anchor="middle" font-family="Liberation Sans" font-size="9.5" fill="#7d7d7d">28</text>
<text x="0" y="0" transform="translate(41.8 429.8) rotate(-90)" text-anchor="middle" font-family="Liberation Sans" font-size="9.5" fill="#7d7d7d">26</text>
<text x="0" y="0" transform="translate(41.8 486.5) rotate(-90)" text-anchor="middle" font-family="Liberation Sans" font-size="9.5" fill="#7d7d7d">24</text>
<text x="0" y="0" transform="translate(41.8 543.2) rotate(-90)" text-anchor="middle" font-family="Liberation Sans" font-size="9.5" fill="#7d7d7d">22</text>
<text x="0" y="0" transform="translate(41.8 599.9) rotate(-90)" text-anchor="middle" font-family="Liberation Sans" font-size="9.5" fill="#7d7d7d">20</text>
<text x="0" y="0" transform="translate(41.8 656.6) rotate(-90)" text-anchor="middle" font-family="Liberation Sans" font-size="9.5" fill="#7d7d7d">18</text>
<text x="0" y="0" transform="translate(41.8 713.3) rotate(-90)" text-anchor="middle" font-family="Liberation Sans" font-size="9.5" fill="#7d7d7d">16</text>
<text x="0" y="0" transform="translate(41.8 770.0) rotate(-90)" text-anchor="middle" font-family="Liberation Sans" font-size="9.5" fill="#7d7d7d">14</text>
<text x="0" y="0" transform="translate(41.8 826.7) rotate(-90)" text-anchor="middle" font-family="Liberation Sans" font-size="9.5" fill="#7d7d7d">12</text>
<text x="0" y="0" transform="translate(41.8 883.4) rotate(-90)" text-anchor="middle" font-family="Liberation Sans" font-size="9.5" fill="#7d7d7d">10</text>

<path d="M47.2 159.5 H48.5 M47.2 165.5 H48.5 M47.2 171.5 H48.5 M46 176.5 H48.5 M47.2 182.5 H48.5 M47.2 188.5 H48.5 M47.2 193.5 H48.5 M47.2 199.5 H48.5 M43 205.5 H48.5 M47.2 210.5 H48.5 M47.2 216.5 H48.5 M47.2 222.5 H48.5 M47.2 227.5 H48.5 M46 233.5 H48.5 M47.2 239.5 H48.5 M47.2 244.5 H48.5 M47.2 250.5 H48.5 M47.2 256.5 H48.5 M43 261.5 H48.5 M47.2 267.5 H48.5 M47.2 273.5 H48.5 M47.2 278.5 H48.5 M47.2 284.5 H48.5 M46 290.5 H48.5 M47.2 295.5 H48.5 M47.2 301.5 H48.5 M47.2 307.5 H48.5 M47.2 312.5 H48.5 M43 318.5 H48.5 M47.2 324.5 H48.5 M47.2 329.5 H48.5 M47.2 335.5 H48.5 M47.2 341.5 H48.5 M46 346.5 H48.5 M47.2 352.5 H48.5 M47.2 358.5 H48.5 M47.2 363.5 H48.5 M47.2 369.5 H48.5 M43 375.5 H48.5 M47.2 380.5 H48.5 M47.2 386.5 H48.5 M47.2 392.5 H48.5 M47.2 397.5 H48.5 M46 403.5 H48.5 M47.2 409.5 H48.5 M47.2 414.5 H48.5 M47.2 420.5 H48.5 M47.2 426.5 H48.5 M43 431.5 H48.5 M47.2 437.5 H48.5 M47.2 443.5 H48.5 M47.2 448.5 H48.5 M47.2 454.5 H48.5 M46 460.5 H48.5 M47.2 465.5 H48.5 M47.2 471.5 H48.5 M47.2 477.5 H48.5 M47.2 482.5 H48.5 M43 488.5 H48.5 M47.2 494.5 H48.5 M47.2 499.5 H48.5 M47.2 505.5 H48.5 M47.2 511.5 H48.5 M46 516.5 H48.5 M47.2 522.5 H48.5 M47.2 528.5 H48.5 M47.2 533.5 H48.5 M47.2 539.5 H48.5 M43 545.5 H48.5 M47.2 550.5 H48.5 M47.2 556.5 H48.5 M47.2 562.5 H48.5 M47.2 567.5 H48.5 M46 573.5 H48.5 M47.2 579.5 H48.5 M47.2 584.5 H48.5 M47.2 590.5 H48.5 M47.2 596.5 H48.5 M43 601.5 H48.5 M47.2 607.5 H48.5 M47.2 613.5 H48.5 M47.2 618.5 H48.5 M47.2 624.5 H48.5 M46 630.5 H48.5 M47.2 635.5 H48.5 M47.2 641.5 H48.5 M47.2 647.5 H48.5 M47.2 652.5 H48.5 M43 658.5 H48.5 M47.2 664.5 H48.5 M47.2 669.5 H48.5 M47.2 675.5 H48.5 M47.2 681.5 H48.5 M46 687.5 H48.5 M47.2 692.5 H48.5 M47.2 698.5 H48.5 M47.2 704.5 H48.5 M47.2 709.5 H48.5 M43 715.5 H48.5 M47.2 721.5 H48.5 M47.2 726.5 H48.5 M47.2 732.5 H48.5 M47.2 738.5 H48.5 M46 743.5 H48.5 M47.2 749.5 H48.5 M47.2 755.5 H48.5 M47.2 760.5 H48.5 M47.2 766.5 H48.5 M43 772.5 H48.5 M47.2 777.5 H48.5 M47.2 783.5 H48.5 M47.2 789.5 H48.5 M47.2 794.5 H48.5 M46 800.5 H48.5 M47.2 806.5 H48.5 M47.2 811.5 H48.5 M47.2 817.5 H48.5 M47.2 823.5 H48.5 M43 828.5 H48.5 M47.2 834.5 H48.5 M47.2 840.5 H48.5 M47.2 845.5 H48.5 M47.2 851.5 H48.5 M46 857.5 H48.5 M47.2 862.5 H48.5 M47.2 868.5 H48.5 M47.2 874.5 H48.5 M47.2 879.5 H48.5 M43 885.5 H48.5 M47.2 891.5 H48.5 M47.2 896.5 H48.5 M47.2 902.5 H48.5 M47.2 908.5 H48.5 M46 913.5 H48.5 M47.2 919.5 H48.5 M47.2 925.5 H48.5 M47.2 930.5 H48.5 M47.2 936.5 H48.5 M43 942.5 H48.5 M47.2 947.5 H48.5 M47.2 953.5 H48.5 M47.2 959.5 H48.5 M47.2 964.5 H48.5 M46 970.5 H48.5 M47.2 976.5 H48.5" stroke="#7a7a7a" stroke-width="1"/>
<path d="M33 954.5 H48" stroke="#111" stroke-width="1.2" stroke-dasharray="3 2.5"/><path d="M1381.5 141 V156" stroke="#111" stroke-width="1.2" stroke-dasharray="3 2.5"/><path d="M1548.5 154 V155.5 M1554.5 150 V155.5 M1559.5 154 V155.5" stroke="#7a7a7a" stroke-width="1"/></svg>

<!-- ===== TOOLBOX ===== -->
<svg class="a" style="left:0;top:117px" width="31" height="560" viewBox="0 117 31 560">
<rect x="4.5" y="122.5" width="23" height="23" fill="#fbfbfb" stroke="#c4c4c4"/>
<path d="M13.5 126.5 L20.5 134 H17.5 L19.5 139.5 L17.5 140.5 L15.5 135 L13.5 137.5 Z" fill="#2a2a2a"/>
<g fill="#666"><path d="M21.5 145 L27 139.5 V145Z"/><path d="M21.5 171 L27 165.5 V171Z"/><path d="M21.5 208 L27 202.5 V208Z"/><path d="M21.5 237 L27 231.5 V237Z"/><path d="M21.5 276 L27 270.5 V276Z"/><path d="M21.5 304 L27 298.5 V304Z"/><path d="M21.5 333 L27 327.5 V333Z"/><path d="M21.5 362 L27 356.5 V362Z"/><path d="M21.5 391 L27 385.5 V391Z"/><path d="M21.5 428 L27 422.5 V428Z"/><path d="M21.5 465 L27 459.5 V465Z"/><path d="M21.5 494 L27 488.5 V494Z"/><path d="M21.5 531 L27 525.5 V531Z"/><path d="M21.5 597 L27 591.5 V597Z"/><path d="M21.5 626 L27 620.5 V626Z"/></g>
<!-- shape tool -->
<path d="M12.5 155 Q11 163 15.5 170" fill="none" stroke="#222" stroke-width="1.1"/><rect x="10.5" y="159" width="3.5" height="3.5" fill="#fff" stroke="#222" stroke-width="0.9"/><path d="M17.5 165 L23 167.5 L21 171Z" fill="#222"/>
<rect x="5" y="181" width="21" height="1" fill="#d6d6d6"/>
<!-- crop -->
<path d="M12 192 V201 H20.5 V208 M8.5 196.5 H12 M12 196.5 H16.5 V201 M20.5 201 H24" fill="none" stroke="#222" stroke-width="2"/>
<!-- hand -->
<path d="M11 229 V224.5 Q11 223 12.3 223 Q13.5 223 13.5 224.5 V222.5 Q13.5 221 14.8 221 Q16 221 16 222.5 V222.8 Q16 221.5 17.3 221.5 Q18.5 221.5 18.5 223 V224 Q18.5 223 19.7 223 Q21 223 21 224.5 V231 Q21 236.5 15.5 236.5 Q11.5 236.5 9.5 232.5 L8.5 230 Q8.5 228.5 9.8 229 Z M13.5 224.5 V229 M16 222.8 V229 M18.5 224 V229" fill="none" stroke="#222" stroke-width="1.1"/>
<rect x="5" y="247" width="21" height="1" fill="#d6d6d6"/>
<!-- freehand -->
<path d="M9.5 274 L23 260" stroke="#222" stroke-width="1.1"/><rect x="8" y="272.5" width="3" height="3" fill="#222"/><rect x="21.5" y="258.5" width="3" height="3" fill="#222"/><rect x="14.5" y="265" width="3.5" height="3.5" fill="#fff" stroke="#222" stroke-width="0.9"/>
<!-- artistic media -->
<path d="M11 292 Q11 287.5 14.5 287.5 Q18 287.5 17 293 Q16 298 19.5 301 Q22 303 22.5 299" fill="none" stroke="#222" stroke-width="1.3"/><path d="M16.8 293 Q16.5 299 20 301.5" fill="none" stroke="#222" stroke-width="2.2"/>
<!-- rect -->
<rect x="8.5" y="316.5" width="16" height="16" fill="none" stroke="#222" stroke-width="1.2"/>
<!-- ellipse -->
<circle cx="16.5" cy="353" r="8" fill="none" stroke="#222" stroke-width="1.2"/>
<!-- polygon -->
<path d="M12.5 374.5 H20.5 L24.5 382 L20.5 389.5 H12.5 L8.5 382 Z" fill="none" stroke="#222" stroke-width="1.2"/>
<rect x="5" y="400" width="21" height="1" fill="#d6d6d6"/>
<!-- text -->
<path d="M8.5 427.5 L16 410.5 L23.5 427.5 M11 421.5 H21" fill="none" stroke="#222" stroke-width="1.5"/>
<rect x="5" y="437" width="21" height="1" fill="#d6d6d6"/>
<!-- dimension -->
<path d="M10 462 L22 450 M8 460 L12 464 M20 448 L24 452" stroke="#222" stroke-width="1.2"/>
<!-- connector -->
<path d="M10.5 478.5 L21.5 490" stroke="#222" stroke-width="1.1"/><rect x="8.5" y="476.5" width="4" height="4" fill="#b5623a" stroke="#333" stroke-width="0.8"/><rect x="19.5" y="488" width="4" height="4" fill="#b5623a" stroke="#333" stroke-width="0.8"/>
<rect x="5" y="503" width="21" height="1" fill="#d6d6d6"/>
<!-- drop shadow -->
<path d="M11.5 527.5 V530.5 H24.5 V517.5 H21.5" fill="none" stroke="#222" stroke-width="1.3"/><rect x="8.5" y="514.5" width="13" height="13" fill="#f2f2f2" stroke="#222" stroke-width="1.2"/>
<!-- transparency -->
<rect x="8.5" y="542.5" width="15.5" height="15.5" fill="#fff" stroke="#222" stroke-width="1"/>
<g fill="#222"><rect x="9" y="543" width="2.6" height="2.6"/><rect x="14.2" y="543" width="2.6" height="2.6"/><rect x="19.4" y="543" width="2.6" height="2.6"/><rect x="11.6" y="545.6" width="2.6" height="2.6"/><rect x="16.8" y="545.6" width="2.6" height="2.6"/><rect x="22" y="545.6" width="2" height="2.6"/><rect x="9" y="548.2" width="2.6" height="2.6"/><rect x="14.2" y="548.2" width="2.6" height="2.6"/><rect x="19.4" y="548.2" width="2.6" height="2.6"/><rect x="11.6" y="550.8" width="2.6" height="2.6"/><rect x="16.8" y="550.8" width="2.6" height="2.6"/><rect x="22" y="550.8" width="2" height="2.6"/><rect x="9" y="553.4" width="2.6" height="2.6"/><rect x="14.2" y="553.4" width="2.6" height="2.6"/><rect x="19.4" y="553.4" width="2.6" height="2.6"/><rect x="11.6" y="556" width="2.6" height="2"/><rect x="16.8" y="556" width="2.6" height="2"/></g>
<rect x="5" y="569" width="21" height="1" fill="#d6d6d6"/>
<!-- eyedropper -->
<path d="M8.5 597 L9.5 593.5 L18 585 L20.5 587.5 L12 596Z" fill="#c09070" stroke="#333" stroke-width="1"/><path d="M17 583 L22.5 588.5" stroke="#222" stroke-width="1.6"/><path d="M19 584 L22 581 Q23.5 579.5 25 581 Q26.5 582.5 25 584 L22 587Z" fill="#222"/>
<!-- interactive fill -->
<path d="M9 616.5 L16 609.5 L23 616.5 L16 623.5 Z" fill="#fff" stroke="#222" stroke-width="1.3"/><path d="M12 616.5 H20 L16 620.5Z" fill="#c0303a"/><path d="M22.5 619 L26.5 623 V626 H22.5Z" fill="#c0303a"/>
<rect x="5" y="635" width="21" height="1" fill="#d6d6d6"/>
<path d="M16 653 V666 M9.5 659.5 H22.5" stroke="#a8a8a8" stroke-width="1.5"/>
</svg>

<!-- ===== PAGE NAV ===== -->
<div class="a" style="left:1549px;top:947px;width:16px;height:17px;background:#f0f0f0"></div><svg class="a" style="left:1549px;top:947px" width="16" height="17"><path d="M4.5 6.5 L8 10 L11.5 6.5" fill="none" stroke="#333" stroke-width="1.8"/></svg>
<div class="a" style="left:50px;top:964px;width:759px;height:1px;background:#7a7a7a"></div><div class="a" style="left:808px;top:964px;width:1px;height:17px;background:#7a7a7a"></div><div class="a" style="left:49px;top:964px;width:1px;height:17px;background:#a8a8a8"></div><div class="a" style="left:809px;top:964px;width:739px;height:17px;background:#fff"></div>
<svg class="a" style="left:31px;top:965px" width="1534" height="38" viewBox="31 965 1534 38">

<!-- add page -->
<path d="M55.5 968.5 H61.5 V977.5 H53 V971 Z" fill="none" stroke="#444" stroke-width="1"/><path d="M57.2 971 V976 M54.8 973.5 H59.6" stroke="#444" stroke-width="1"/>
<rect x="69" y="968" width="1.6" height="10" fill="#222"/><path d="M79 968 V978 L71.5 973Z" fill="#222"/>
<path d="M94 968 V978 L86.5 973Z" fill="#222"/>
<path d="M154 968 V978 L161.5 973Z" fill="#b4b4b4"/>
<path d="M169 968 V978 L176.5 973Z" fill="#b4b4b4"/><rect x="177.5" y="968" width="1.4" height="10" fill="#b4b4b4"/>
<path d="M187.5 968.5 H193.5 V977.5 H185 V971 Z" fill="none" stroke="#444" stroke-width="1"/><path d="M189.2 971 V976 M186.8 973.5 H191.6" stroke="#444" stroke-width="1"/>
<!-- page tabs -->
<path d="M207.5 965.5 L213 979.5 H262 L257 965.5 Z" fill="#d8d8d8" stroke="#9a9a9a" stroke-width="1"/>
<path d="M261 965.5 L266 979.5 H312 L317 965.5" fill="#fff" stroke="#9a9a9a" stroke-width="1"/>
<!-- hscroll splitter -->
<path d="M802.5 968 V978 M805.5 968 V978" stroke="#bbb" stroke-width="1" stroke-dasharray="1 2"/>
<rect x="811" y="965" width="14" height="15" fill="#f3f3f3"/>
<path d="M820.5 969 L816.5 972.5 L820.5 976" fill="none" stroke="#333" stroke-width="1.8"/>
<rect x="937" y="965" width="412" height="15" fill="#c8c8c8"/>
<rect x="1531" y="965" width="16" height="15" fill="#f3f3f3"/>
<path d="M1537 969 L1541 972.5 L1537 976" fill="none" stroke="#333" stroke-width="1.8"/>
<circle cx="1555.5" cy="971" r="4.3" fill="none" stroke="#333" stroke-width="1"/><path d="M1558.5 974 L1561.5 977.5" stroke="#333" stroke-width="1.5"/><circle cx="1555.5" cy="969" r="0.6" fill="#333"/><circle cx="1555.5" cy="973" r="0.6" fill="#333"/><circle cx="1553.5" cy="971" r="0.6" fill="#333"/><circle cx="1557.5" cy="971" r="0.6" fill="#333"/>
<rect x="31" y="981" width="1534" height="1" fill="#cdcdcd"/>
<!-- doc palette -->
<path d="M34.5 984 V1000 M38.5 984 V1000" stroke="#bdbdbd" stroke-width="1" stroke-dasharray="1 2"/><path d="M36.5 985.5 V1000" stroke="#bdbdbd" stroke-width="1" stroke-dasharray="1 2"/>
<path d="M47 988 L51.5 992 L47 996Z" fill="#5c5c5c"/>
<path d="M63.5 998 L64.3 995.3 L71.5 988 L73.5 990 L66.3 997.3Z" fill="#c09070" stroke="#333" stroke-width="0.9"/><path d="M70.5 986.5 L75 991" stroke="#222" stroke-width="1.4"/><path d="M72 987.5 L74.5 985 Q76 983.5 77.5 985 Q79 986.5 77.5 988 L75 990.5Z" fill="#222"/>
<path d="M89 988 L84.5 992 L89 996" fill="none" stroke="#c8c8c8" stroke-width="1.5"/>
<rect x="96.5" y="983.5" width="16.5" height="17" fill="#fff" stroke="#333" stroke-width="1"/><path d="M98.5 999 L111 985" stroke="#a06070" stroke-width="1"/>
<rect x="113" y="983" width="17.5" height="18" fill="#1b6b99"/>
<rect x="130.5" y="983" width="17" height="18" fill="#062a43"/>
<rect x="147.5" y="983" width="17.5" height="18" fill="#0a4669"/>
<path d="M1529 987 L1533 991 L1529 995" fill="none" stroke="#c0c0c0" stroke-width="1.3"/>
<path d="M1543 987 L1547 991 L1543 995 M1548 987 L1552 991 L1548 995" fill="none" stroke="#c0c0c0" stroke-width="1.2"/>
</svg>
<div class="t" style="left:102px;top:966px;font-size:12px;color:#b0b0b0;word-spacing:3px">2 von 2</div>
<div class="t" style="left:218px;top:966px;font-size:10.5px;color:#7a7a7a">Seite 1</div>
<div class="t" style="left:271.5px;top:966px;font-size:10.5px;color:#111">Seite 2</div>

<!-- ===== STATUS BAR ===== -->
<svg class="a" style="left:0;top:1002px" width="1920" height="38" viewBox="0 1002 1920 38">
<rect x="0" y="1002" width="1920" height="1" fill="#d6d6d6"/>
<g transform="translate(19 1021)"><g fill="#2a2a2a"><rect x="-1.5" y="-8" width="3" height="16" rx="0.6"/><rect x="-1.5" y="-8" width="3" height="16" rx="0.6" transform="rotate(45)"/><rect x="-1.5" y="-8" width="3" height="16" rx="0.6" transform="rotate(90)"/><rect x="-1.5" y="-8" width="3" height="16" rx="0.6" transform="rotate(135)"/><circle r="6.2"/></g><circle r="3.5" fill="#f2f2f2"/></g>
<path d="M25.5 1031.5 L30 1027 V1031.5Z" fill="#777"/>
<!-- fill icon -->
<path d="M1433.5 1021 L1441 1013.5 L1448.5 1021 L1441 1028.5Z" fill="#fff" stroke="#222" stroke-width="1.3"/><path d="M1437 1021 H1445 L1441 1024.5Z" fill="#c0303a"/><path d="M1445 1028.5 L1449 1024.5 V1029.5 H1445Z" fill="#c0303a"/>
<rect x="1452" y="1011" width="20" height="20" fill="#0b4366" stroke="#667" stroke-width="0.5"/>
<!-- pen icon -->
<path d="M1642.5 1013 L1645.5 1020.5 L1643.5 1023 H1641.5 L1639.5 1020.5 Z" fill="none" stroke="#222" stroke-width="1"/><rect x="1640.5" y="1023.5" width="4" height="5" fill="none" stroke="#222" stroke-width="1"/>
<rect x="1650.5" y="1010.5" width="21" height="21" fill="#fff" stroke="#9a9a9a" stroke-width="1"/><path d="M1651.5 1030.5 L1670.5 1011.5" stroke="#c03030" stroke-width="1.6"/>
<rect x="1883" y="1007" width="1" height="28" fill="#dcdcdc"/>
<rect x="1893.5" y="1014.5" width="16" height="11" fill="#fff" stroke="#333" stroke-width="1"/><rect x="1894" y="1015" width="15" height="5" fill="#d03030"/><rect x="1894" y="1020" width="15" height="5" fill="#3a90d0"/><circle cx="1901.5" cy="1019.5" r="2" fill="#fff"/><path d="M1897 1029.5 H1906 M1901.5 1026 V1029" stroke="#333" stroke-width="1"/>
</svg>
<div class="t" style="left:36px;top:1015px;font-size:11.93px;color:#111">Doppelklicken auf das Hilfsmittel zum Auswählen aller Objekte; Umschalt + Klicken für Mehrfachauswahl; Alt + Klicken zum Auswählen überdeckter Objekte; Strg + Klicken zum Auswählen in Gruppen</div>
<div class="t" style="left:1110px;top:1015px;font-size:11.4px;color:#111">Kurve auf Ebene 1</div>
<div class="t" style="left:1477.5px;top:1015px;font-size:11px;color:#111">C:93 M:46 Y:21 K:54</div>
<div class="t" style="left:1676px;top:1015px;font-size:11.5px;color:#111">Keine</div>
<div class="t" style="left:1716px;top:1021px;font-size:11px;color:#e9e9e9">Arbeitsbereich</div>

<!-- ===== TASKBAR ===== -->
<div class="a" style="left:0;top:1040px;width:1920px;height:40px;background:linear-gradient(90deg,#1f231f 0%,#222320 51%,#2e312e 54%,#3a3d3a 60%,#393c39 72%,#2f2f31 82%,#2b2b2d 100%)"></div>
<div class="a" style="left:48px;top:1040px;width:344px;height:40px;background:#f0f0f0"></div>
<svg class="a" style="left:0;top:1040px" width="1920" height="40" viewBox="0 1040 1920 40">
<!-- start -->
<path d="M16 1053.5 L23 1052.5 V1059.3 H16Z M24 1052.3 L32 1051.2 V1059.3 H24Z M16 1060.3 H23 V1067 L16 1066Z M24 1060.3 H32 V1068 L24 1067.1Z" fill="#fff"/>
<!-- search -->
<circle cx="70" cy="1057.5" r="5" fill="none" stroke="#222" stroke-width="1.3"/><path d="M66.5 1061 L60.5 1067" stroke="#222" stroke-width="1.5"/>
<!-- tulips -->
<rect x="48" y="1040" width="344" height="1" fill="#b8b8b8"/>
<path d="M331 1080 V1068 M342.5 1080 V1059 M357 1080 V1066" stroke="#5a9a50" stroke-width="1.6" fill="none"/>
<path d="M331 1076 Q335 1072 339 1073 Q335 1077 331 1077Z M342.5 1071 Q339 1069 336.5 1070 Q339 1073 342.5 1073Z M357 1076 Q360 1073 363 1074 Q360 1078 357 1077Z" fill="#6aaa5a"/>
<path d="M323 1054.5 L326.5 1057 L329.5 1053.5 L332.5 1057 L336.5 1054.5 Q337.5 1064 334.5 1067.5 Q330 1070.5 325.5 1067.5 Q322 1064 323 1054.5Z" fill="#e03535"/>
<path d="M337.5 1048 L340.5 1050 L343 1046.8 L345.5 1050 L348.5 1048 Q349.5 1056 346.5 1058.5 Q343 1060.5 339.5 1058.5 Q336.5 1056 337.5 1048Z" fill="#e23a3a"/>
<path d="M351 1051 L355 1053.5 L358.5 1049.5 L362 1053.5 L366 1051 Q367 1062 363.5 1065 Q358.5 1068 353.5 1065 Q350 1062 351 1051Z" fill="#e53b3b"/>
<path d="M363 1042 L368 1046 L373 1048 L379 1051 L386 1052.5 L392 1053" fill="none" stroke="#e8d0b0" stroke-width="0.8"/>
<path d="M363.5 1042 L369 1045.5 L364.5 1049Z" fill="#f0b890"/><path d="M370 1046.5 L376.5 1049 L371 1054Z" fill="#8cc860"/><path d="M377.5 1049.5 L384 1052 L378.5 1057Z" fill="#d03050"/><path d="M385 1052.5 L391.5 1053.5 L386.5 1058.5Z" fill="#f4c868"/>
<circle cx="317.7" cy="1050.5" r="1.6" fill="#d8b050"/><path d="M374 1061.5 L375.5 1063.5 L377.5 1064 L375.7 1065.5 L376 1068 L374 1066.5 L372 1068 L372.3 1065.5 L370.5 1064 L372.5 1063.5Z" fill="#d080e0"/><circle cx="380.7" cy="1073" r="1.5" fill="#80b0d8"/>
<!-- cortana -->
<circle cx="416" cy="1060.5" r="6.3" fill="none" stroke="#fff" stroke-width="2"/>
<!-- task view -->
<path d="M456.5 1053.5 H467.5 V1067.5 H456.5Z" fill="none" stroke="#fff" stroke-width="1.3"/><path d="M455 1056 H469 M455 1065 H469" stroke="#fff" stroke-width="1.3"/><rect x="470" y="1053" width="2" height="2" fill="#fff"/><rect x="470" y="1058" width="2" height="5" fill="#fff"/>
<!-- edge -->
<circle cx="515" cy="1060" r="11.5" fill="#1580d8"/>
<path d="M504 1058 Q506 1049 515.5 1048.5 Q525 1048.5 526.5 1057 Q527 1063 521 1063.5 H511.5 Q512 1059 516 1058.5 Q519.5 1058.5 520 1061 Q520 1054 514 1053.5 Q507 1053.5 504 1058Z" fill="#38c98a"/>
<path d="M511 1063.5 Q512 1070 519 1071 Q523 1071 526 1068.5 Q522 1073.5 514.5 1072.5 Q506 1071 504 1062 Q506 1066 511 1063.5Z" fill="#0b5cb0"/>
<!-- explorer -->
<path d="M552.5 1050 H560 L562 1052 H575 V1070 H552.5Z" fill="#f4c14a"/><rect x="552.5" y="1054" width="22.5" height="16" fill="#ffd968"/><rect x="558" y="1063" width="11" height="7" fill="#3a78c0"/><rect x="560" y="1065" width="7" height="5" fill="#ffd968"/>
<!-- mail -->
<path d="M600 1056 L612.5 1048 L625 1056 V1071 H600Z" fill="#1f7fd0"/><path d="M600 1057 L612.5 1064 L625 1057 V1071 H600Z" fill="#35a8f0"/><path d="M600 1071 L612.5 1062 L625 1071Z" fill="#4bb8f8"/>
<!-- store -->
<path d="M650 1055 H673 V1071 Q673 1072 672 1072 H651 Q650 1072 650 1071Z" fill="#fafafa"/><path d="M656 1055 V1051 Q656 1048 659 1048 H664 Q667 1048 667 1051 V1055" fill="none" stroke="#2a8fd0" stroke-width="1.6"/><rect x="656.5" y="1059" width="4.5" height="4.5" fill="#f25022"/><rect x="662" y="1059" width="4.5" height="4.5" fill="#7fba00"/><rect x="656.5" y="1064.5" width="4.5" height="4.5" fill="#00a4ef"/><rect x="662" y="1064.5" width="4.5" height="4.5" fill="#ffb900"/>
<!-- openoffice -->
<circle cx="710.7" cy="1060" r="11.5" fill="#2d8ad0"/><path d="M700 1063 Q710 1058 722 1063 Q712 1061 706 1068Z" fill="#fff"/><path d="M708 1056 Q712 1053 716 1055 Q712 1055 710 1058Z M713 1052 Q716 1050 719 1052 Q716 1052 715 1054Z" fill="#fff"/>
<!-- chrome -->
<circle cx="759.4" cy="1060" r="11.5" fill="#db4437"/><path d="M759.4 1060 L769.4 1054.2 A11.5 11.5 0 0 1 765.2 1070 Z" fill="#f4c20d"/><path d="M759.4 1060 L765.2 1070 A11.5 11.5 0 0 1 749.4 1054.2 Z" fill="#0f9d58"/><circle cx="759.4" cy="1060" r="5.3" fill="#fff"/><circle cx="759.4" cy="1060" r="4.2" fill="#4285f4"/>
<!-- scanner -->
<rect x="796.5" y="1048" width="25" height="24" rx="2" fill="#2a3ab0"/><path d="M800 1066 H818 L814 1058 H804Z" fill="#fff"/><path d="M803 1055 L815 1052" stroke="#fff" stroke-width="1.5"/><rect x="799" y="1068" width="20" height="2" fill="#fff"/>
<!-- office -->
<path d="M850 1052 L862 1048 L868 1050 V1070 L862 1072 L850 1068Z" fill="#e04a1a"/><path d="M855 1054 L862 1052 V1068 L855 1066Z" fill="#fff"/><path d="M857 1056 L862 1055 V1065 L857 1064Z" fill="#e04a1a"/>
<!-- telegram -->
<circle cx="906" cy="1060" r="11.5" fill="#2fa3dc"/><path d="M899 1059.5 L913 1054 L910.5 1066 L906 1062.5 L903.5 1065 L903 1061Z" fill="#fff"/><path d="M903 1061 L910 1056.5 L905 1062Z" fill="#c8e0f0"/>
<!-- skype -->
<circle cx="955.4" cy="1060" r="11.5" fill="#18a8e8"/><text x="955.4" y="1066" text-anchor="middle" font-family="Liberation Sans" font-weight="bold" font-size="15" fill="#fff">S</text>
<!-- corel active -->
<rect x="981" y="1040" width="48" height="40" fill="#3c3e3d"/><rect x="981" y="1078" width="48" height="2" fill="#c8b898"/>
<circle cx="1004.2" cy="1060" r="12" fill="#8fd048"/><circle cx="1004.2" cy="1060" r="10.2" fill="#14250f"/><path d="M997.5 1055 L1000.5 1052.5 L1009.5 1062.5 L1009.5 1067 L1005 1066.5Z" fill="#e0e0e0"/><path d="M997.5 1055 L1000.5 1052.5 L1002.5 1054.5 L999.5 1057Z" fill="#999"/>
<!-- weather -->
<circle cx="1449" cy="1056" r="4.5" fill="#f5c040"/><path d="M1444 1067 Q1442 1067 1442 1064 Q1442 1061 1446 1061 Q1447 1057 1452 1057 Q1457 1057 1458 1061 Q1463 1061 1463.5 1064 Q1463.5 1067 1460 1067Z" fill="#d0e4f4"/>
<!-- tray -->
<path d="M1611.5 1063.5 L1617 1058 L1622.5 1063.5" fill="none" stroke="#fff" stroke-width="1.3"/>
<path d="M1633 1057.5 H1636 L1640 1054 V1067 L1636 1063.5 H1633Z" fill="none" stroke="#fff" stroke-width="1.2"/><path d="M1642.5 1057.5 Q1644 1060.5 1642.5 1063.5 M1645 1055.5 Q1648 1060.5 1645 1065.5" fill="none" stroke="#fff" stroke-width="1.2"/>
<rect x="1661" y="1056" width="8" height="9" rx="2" fill="none" stroke="#fff" stroke-width="1.2"/><path d="M1669.5 1058 L1672 1056.5 V1064.5 L1669.5 1063" fill="none" stroke="#fff" stroke-width="1.1"/><path d="M1660 1053 Q1665 1051 1670 1053 M1660 1068 Q1665 1070 1670 1068" fill="none" stroke="#fff" stroke-width="1"/>
<rect x="1685.5" y="1054.5" width="12" height="9" fill="none" stroke="#fff" stroke-width="1.2"/><path d="M1691.5 1064 V1068 M1687 1068 H1696" stroke="#fff" stroke-width="1.2"/><rect x="1682" y="1053" width="4" height="4" fill="none" stroke="#fff" stroke-width="1"/>
<rect x="1701" y="1040" width="31.5" height="40" fill="#3a3d3b"/><rect x="1916" y="1040" width="1" height="40" fill="#5a5d5b"/>
<path d="M1711 1068 Q1709 1064 1713 1062 L1722 1053 Q1724 1051 1725.5 1053 Q1727 1055 1725 1057 L1716 1066 M1712 1068 Q1716 1066 1718 1069 Q1721 1067 1724 1064" fill="none" stroke="#fff" stroke-width="1.2"/>
<rect x="1738" y="1054" width="21.5" height="12" rx="1" fill="none" stroke="#fff" stroke-width="1.2"/><path d="M1741 1057.5 H1756 M1741 1060 H1756 M1744 1063 H1753" stroke="#fff" stroke-width="1" stroke-dasharray="1.2 0.9"/>
<path d="M1879.5 1053.5 H1894.5 V1065.5 H1890 L1887 1068.5 L1884 1065.5 H1879.5Z" fill="none" stroke="#fff" stroke-width="1.2"/>
</svg>
<div class="t" style="left:88px;top:1052px;font-size:14.6px;line-height:17px;color:#333">Zur Suche Text hier eingeben</div>
<div class="t" style="left:1473px;top:1052px;font-size:13.2px;line-height:17px;color:#fff">12°C</div>
<div class="t" style="left:1511px;top:1052px;font-size:13.8px;line-height:17px;color:#fff">Stark bewölkt</div>
<div class="t" style="left:1772px;top:1053px;font-size:10.3px;line-height:14px;color:#fff">DEU</div>
<div class="t" style="left:1820px;top:1044px;font-size:10.6px;line-height:14px;color:#fff">07:04</div>
<div class="t" style="left:1807px;top:1061px;font-size:10.7px;line-height:14px;color:#fff">10.06.2022</div>
<!-- SHAPE -->
<svg class="a" style="left:0;top:0" width="1920" height="1080" viewBox="0 0 1920 1080">
<path d="M666 365 C690 363 720 361 744 362 C743 440 752 503 784 503 C806 503 838 470 840 420 C841 395 836 375 840 363 C842 358 850 360 856 364 C866 370 880 373 893 371 C903 369 909 368 910 378 L909 420 L906 540 L904 710 L903 836 C900 842 885 840 870 837.5 C840 832 800 831 783 831 C740 831 690 833 650 836 Q642 837 642 828 C646 790 652 740 652 700 L652 640 L651 595 Q651 578 660 575 C690 573 735 573 743 574 Q750 575 750 588 C748 630 741 680 741 720 C741 760 750 800 782 804 C805 804 840 775 848 730 L851 700 L852 560 Q852 536 838 533 C820 532 800 535 790 534.5 C770 533 700 533 667 532.6 L667 450 Z" fill="#f08000" stroke="#0a4566" stroke-width="7.5" stroke-linejoin="round"/>
<g fill="#fff" stroke="#000" stroke-width="0.95"><rect x="662.1" y="362.1" width="3.8" height="3.8"/><rect x="664.1" y="361.1" width="3.8" height="3.8"/><rect x="669.1" y="367.7" width="3.8" height="3.8"/><rect x="702.9" y="357.0" width="3.8" height="3.8"/><rect x="702.9" y="365.0" width="3.8" height="3.8"/><rect x="744.1" y="357.0" width="3.8" height="3.8"/><rect x="745.1" y="359.4" width="3.8" height="3.8"/><rect x="745.1" y="362.1" width="3.8" height="3.8"/><rect x="737.1" y="363.1" width="3.8" height="3.8"/><rect x="660.0" y="447.9" width="3.8" height="3.8"/><rect x="668.1" y="447.9" width="3.8" height="3.8"/><rect x="760.9" y="495.1" width="3.8" height="3.8"/><rect x="767.1" y="490.0" width="3.8" height="3.8"/><rect x="800.9" y="488.1" width="3.8" height="3.8"/><rect x="806.0" y="494.9" width="3.8" height="3.8"/><rect x="834.5" y="360.9" width="3.8" height="3.8"/><rect x="841.1" y="365.0" width="3.8" height="3.8"/><rect x="853.1" y="359.9" width="3.8" height="3.8"/><rect x="850.1" y="367.1" width="3.8" height="3.8"/><rect x="834.5" y="384.9" width="3.8" height="3.8"/><rect x="842.1" y="384.9" width="3.8" height="3.8"/><rect x="892.9" y="365.0" width="3.8" height="3.8"/><rect x="895.0" y="373.1" width="3.8" height="3.8"/><rect x="903.1" y="375.1" width="3.8" height="3.8"/><rect x="911.1" y="373.1" width="3.8" height="3.8"/><rect x="902.1" y="456.8" width="3.8" height="3.8"/><rect x="910.1" y="457.8" width="3.8" height="3.8"/><rect x="668.1" y="527.0" width="3.8" height="3.8"/><rect x="663.1" y="532.9" width="3.8" height="3.8"/><rect x="745.1" y="527.9" width="3.8" height="3.8"/><rect x="745.1" y="535.9" width="3.8" height="3.8"/><rect x="789.1" y="528.8" width="3.8" height="3.8"/><rect x="789.1" y="537.1" width="3.8" height="3.8"/><rect x="815.5" y="527.9" width="3.8" height="3.8"/><rect x="816.1" y="536.1" width="3.8" height="3.8"/><rect x="829.8" y="527.1" width="3.8" height="3.8"/><rect x="829.8" y="534.8" width="3.8" height="3.8"/><rect x="653.1" y="573.1" width="3.8" height="3.8"/><rect x="658.1" y="580.1" width="3.8" height="3.8"/><rect x="728.9" y="566.9" width="3.8" height="3.8"/><rect x="728.9" y="575.1" width="3.8" height="3.8"/><rect x="741.9" y="568.1" width="3.8" height="3.8"/><rect x="741.9" y="576.1" width="3.8" height="3.8"/><rect x="743.1" y="588.1" width="3.8" height="3.8"/><rect x="751.1" y="588.9" width="3.8" height="3.8"/><rect x="644.8" y="613.1" width="3.8" height="3.8"/><rect x="653.1" y="611.9" width="3.8" height="3.8"/><rect x="645.9" y="638.9" width="3.8" height="3.8"/><rect x="653.9" y="638.9" width="3.8" height="3.8"/><rect x="645.9" y="671.1" width="3.8" height="3.8"/><rect x="653.9" y="671.1" width="3.8" height="3.8"/><rect x="645.9" y="710.9" width="3.8" height="3.8"/><rect x="653.9" y="710.9" width="3.8" height="3.8"/><rect x="739.8" y="625.1" width="3.8" height="3.8"/><rect x="748.1" y="625.9" width="3.8" height="3.8"/><rect x="639.1" y="795.0" width="3.8" height="3.8"/><rect x="647.1" y="796.1" width="3.8" height="3.8"/><rect x="635.9" y="827.8" width="3.8" height="3.8"/><rect x="643.7" y="827.0" width="3.8" height="3.8"/><rect x="645.0" y="830.1" width="3.8" height="3.8"/><rect x="646.1" y="838.1" width="3.8" height="3.8"/><rect x="696.8" y="827.1" width="3.8" height="3.8"/><rect x="696.8" y="835.1" width="3.8" height="3.8"/><rect x="781.1" y="825.0" width="3.8" height="3.8"/><rect x="781.1" y="832.8" width="3.8" height="3.8"/><rect x="870.0" y="832.1" width="3.8" height="3.8"/><rect x="869.1" y="840.1" width="3.8" height="3.8"/><rect x="896.8" y="834.1" width="3.8" height="3.8"/><rect x="902.8" y="839.1" width="3.8" height="3.8"/><rect x="750.0" y="788.7" width="3.8" height="3.8"/><rect x="757.0" y="786.1" width="3.8" height="3.8"/><rect x="770.0" y="797.8" width="3.8" height="3.8"/><rect x="767.1" y="805.1" width="3.8" height="3.8"/><rect x="791.1" y="796.1" width="3.8" height="3.8"/><rect x="794.1" y="804.1" width="3.8" height="3.8"/><rect x="816.1" y="779.8" width="3.8" height="3.8"/><rect x="821.1" y="786.1" width="3.8" height="3.8"/><rect x="845.0" y="703.1" width="3.8" height="3.8"/><rect x="853.1" y="703.1" width="3.8" height="3.8"/><rect x="896.8" y="705.9" width="3.8" height="3.8"/><rect x="905.1" y="705.9" width="3.8" height="3.8"/></g>
<g fill="#000"><rect x="628.5" y="348.5" width="7" height="7"/><rect x="772.5" y="348.5" width="7" height="7"/><rect x="916.5" y="348.5" width="7" height="7"/><rect x="628.5" y="597.5" width="7" height="7"/><rect x="916.5" y="597.5" width="7" height="7"/><rect x="628.5" y="846.5" width="7" height="7"/><rect x="772.5" y="846.5" width="7" height="7"/><rect x="916.5" y="846.5" width="7" height="7"/></g>
<path d="M773 598 L779 604 M779 598 L773 604" stroke="#333" stroke-width="1.5"/>
</svg>
<!-- ===== DOCKER ===== -->
<div class="a" style="left:1566px;top:117px;width:2px;height:886px;background:#fafafa"></div>
<div class="a" style="left:1568px;top:117px;width:1px;height:886px;background:#c9c9c9"></div>
<div class="a" style="left:1569px;top:117px;width:331px;height:23px;background:#e8e8e8;border-bottom:1px solid #ababab"></div>
<div class="t" style="left:1576.5px;top:122px;font-size:12px;color:#111">Objekte</div>
<svg class="a" style="left:1860px;top:120px" width="40" height="18"><path d="M5 5 L9 9 L5 13Z M10 5 L14 9 L10 13Z" fill="#a9a9a9"/><path d="M24 5 L32 13 M32 5 L24 13" stroke="#b0b0b0" stroke-width="1.5"/></svg>
<div class="a" style="left:1569px;top:141px;width:309px;height:835px;background:#f2f2f2"></div>
<div class="a" style="left:1571px;top:148px;width:306px;height:24px;background:#fff;border-top:1px solid #a5a5a5;border-bottom:1px solid #a5a5a5;border-left:1px solid #d5d5d5"></div>
<div class="t" style="left:1575px;top:153px;font-size:12px;color:#555">Suche</div>
<svg class="a" style="left:1569px;top:172px" width="309" height="34" viewBox="1569 172 309 34">
<rect x="1571.5" y="177.5" width="23" height="23" fill="#f7f7f7" stroke="#bdbdbd"/>
<path d="M1576 186 L1579 183 H1587 V187 M1576 186 V197 H1583" fill="none" stroke="#222" stroke-width="1.2"/><path d="M1576 186 L1579 183 V186Z" fill="#222"/>
<path d="M1585 188 L1590 190.5 L1585 193 L1580 190.5Z" fill="#f2f2f2" stroke="#222" stroke-width="1"/><path d="M1580 193 L1585 190.5 L1590 193 L1585 196.5Z" fill="#222"/>
<path d="M1612 181.5 L1619.5 185.5 L1612 189.5 L1604.5 185.5Z" fill="#f2f2f2" stroke="#222" stroke-width="1.2"/><path d="M1604.5 190 L1612 186.5 L1619.5 190 L1612 196.5Z" fill="#222"/>
<path d="M1637 182 H1646.5 V196.5 H1634 V185Z" fill="none" stroke="#222" stroke-width="1.2"/><path d="M1634 185 L1637 182 V185Z" fill="#222"/>
<g transform="translate(1865 189)"><g fill="#222"><rect x="-1.5" y="-8" width="3" height="16" rx="0.6"/><rect x="-1.5" y="-8" width="3" height="16" rx="0.6" transform="rotate(45)"/><rect x="-1.5" y="-8" width="3" height="16" rx="0.6" transform="rotate(90)"/><rect x="-1.5" y="-8" width="3" height="16" rx="0.6" transform="rotate(135)"/><circle r="6.2"/></g><circle r="3.5" fill="#f2f2f2"/></g>
<path d="M1872 199 L1876 195 V199Z" fill="#666"/>
</svg>
<div class="t" style="left:1658px;top:182px;font-size:12px;font-weight:bold;color:#111">Seite 2</div>
<div class="t" style="left:1710px;top:182px;font-size:12px;color:#111">Ebene 1</div>
<div class="a" style="left:1569px;top:205px;width:309px;height:771px;background:#fff"></div>
<svg class="a" style="left:1569px;top:205px" width="309" height="400" viewBox="1569 205 309 400">
<rect x="1571" y="205" width="305" height="25" fill="#efefef"/>
<path d="M1580 215 H1588.5 L1584.25 220Z" fill="#1a1a1a"/>
<rect x="1571" y="230" width="305" height="1" fill="#dcdcdc"/>
<rect x="1571" y="256" width="305" height="1" fill="#dcdcdc"/>
<path d="M1596 241.5 H1608 M1599.5 238 V250" stroke="#444" stroke-width="1" stroke-dasharray="1.5 1"/><circle cx="1599.5" cy="241.5" r="1.6" fill="none" stroke="#444" stroke-width="1"/>
<path d="M1851.5 243.5 V237.5 H1855.5 L1857.5 239.5 V243.5" fill="none" stroke="#444" stroke-width="1"/><path d="M1848.5 244.5 H1860.5 V249.5 H1848.5 Z" fill="none" stroke="#444" stroke-width="1"/><path d="M1850 247.0 H1859" stroke="#444" stroke-width="0.8"/>
<rect x="1868" y="235" width="4" height="18" rx="2" fill="#0a1fd0"/>
<path d="M1584 267 H1588 L1586 270Z" fill="none"/>
<path d="M1580 267 H1588.5 L1584.25 272Z" fill="#1a1a1a"/>
<path d="M1596.5 271.0 L1602 268.0 L1607.5 271.0 L1602 274.5Z" fill="#222"/><path d="M1602 263.0 L1607.5 266.5 L1602 270.0 L1596.5 266.5Z" fill="#fff" stroke="#222" stroke-width="1"/>
<rect x="1868" y="261" width="4" height="18" rx="2" fill="#151515"/>
<path d="M1609 288 Q1613 293 1611 296 Q1608 300 1612 304" fill="none" stroke="#d8d8d8" stroke-width="1.2"/>
<rect x="1571" y="334" width="305" height="1" fill="#dcdcdc"/>
<path d="M1606 314 V330 H1617 V314 H1614 V319 H1609 V314Z M1609.5 321 H1613.5 V328 H1609.5Z" fill="#cc8a48" fill-rule="evenodd" stroke="#8a6a48" stroke-width="0.8"/>
<rect x="1571" y="335" width="305" height="25" fill="#efefef"/>
<path d="M1580 345 H1588.5 L1584.25 350Z" fill="#1a1a1a"/>
<rect x="1571" y="360" width="305" height="1" fill="#dcdcdc"/>
<rect x="1571" y="386" width="305" height="1" fill="#dcdcdc"/>
<path d="M1596 371.5 H1608 M1599.5 368 V380" stroke="#444" stroke-width="1" stroke-dasharray="1.5 1"/><circle cx="1599.5" cy="371.5" r="1.6" fill="none" stroke="#444" stroke-width="1"/>
<path d="M1851.5 373.5 V367.5 H1855.5 L1857.5 369.5 V373.5" fill="none" stroke="#444" stroke-width="1"/><path d="M1848.5 374.5 H1860.5 V379.5 H1848.5 Z" fill="none" stroke="#444" stroke-width="1"/><path d="M1850 377.0 H1859" stroke="#444" stroke-width="0.8"/>
<rect x="1868" y="365" width="4" height="18" rx="2" fill="#0a1fd0"/>
<path d="M1584 397 H1588 L1586 400Z" fill="none"/>
<path d="M1580 397 H1588.5 L1584.25 402Z" fill="#1a1a1a"/>
<path d="M1596.5 401.0 L1602 398.0 L1607.5 401.0 L1602 404.5Z" fill="#222"/><path d="M1602 393.0 L1607.5 396.5 L1602 400.0 L1596.5 396.5Z" fill="#fff" stroke="#222" stroke-width="1"/>
<rect x="1868" y="391" width="4" height="18" rx="2" fill="#151515"/>
<rect x="1571" y="413" width="305" height="26" fill="#dcebfb"/>
<path d="M1607 418 V434 H1616 V418 H1613.5 V423 H1609.5 V418Z M1609.5 425 H1613 V432 H1609.5Z" fill="none" stroke="#7aa0b8" stroke-width="1"/>
<rect x="1571" y="464" width="305" height="1" fill="#dcdcdc"/>
<path d="M1606 444 V460 H1617 V444 H1614 V449 H1609 V444Z M1609.5 451 H1613.5 V458 H1609.5Z" fill="#cc8a48" fill-rule="evenodd" stroke="#8a6a48" stroke-width="0.8"/>
<rect x="1571" y="465" width="305" height="25" fill="#efefef"/>
<path d="M1580 475 H1588.5 L1584.25 480Z" fill="#1a1a1a"/>
<rect x="1571" y="490" width="305" height="1" fill="#dcdcdc"/>
<rect x="1571" y="516" width="305" height="1" fill="#dcdcdc"/>
<path d="M1596 501.5 H1608 M1599.5 498 V510" stroke="#444" stroke-width="1" stroke-dasharray="1.5 1"/><circle cx="1599.5" cy="501.5" r="1.6" fill="none" stroke="#444" stroke-width="1"/>
<path d="M1851.5 503.5 V497.5 H1855.5 L1857.5 499.5 V503.5" fill="none" stroke="#444" stroke-width="1"/><path d="M1848.5 504.5 H1860.5 V509.5 H1848.5 Z" fill="none" stroke="#444" stroke-width="1"/><path d="M1850 507.0 H1859" stroke="#444" stroke-width="0.8"/>
<rect x="1868" y="495" width="4" height="18" rx="2" fill="#0a1fd0"/>
<path d="M1580 527 H1588.5 L1584.25 532Z" fill="#1a1a1a"/>
<rect x="1597.5" y="523.5" width="10" height="10" fill="none" stroke="#333" stroke-width="1"/><rect x="1598.5" y="524.5" width="8" height="8" fill="#333"/><rect x="1596" y="522.0" width="3" height="3" fill="#333"/><rect x="1606" y="522.0" width="3" height="3" fill="#333"/><rect x="1596" y="532.0" width="3" height="3" fill="#333"/><rect x="1606" y="532.0" width="3" height="3" fill="#333"/>
<path d="M1816 530 Q1822 523 1828 530 Q1822 537 1816 530Z" fill="none" stroke="#444" stroke-width="1"/><circle cx="1822" cy="530" r="2.2" fill="#444"/><path d="M1816 525 L1828 535" stroke="#444" stroke-width="1"/>
<path d="M1836 529 V526 A2.5 2.5 0 0 1 1841 526 V529" fill="none" stroke="#222" stroke-width="1.2"/><rect x="1834" y="529" width="9" height="7" fill="#222"/>
<path d="M1851.5 529.5 V523.5 H1855.5 L1857.5 525.5 V529.5" fill="none" stroke="#444" stroke-width="1"/><path d="M1848.5 530.5 H1860.5 V535.5 H1848.5 Z" fill="none" stroke="#444" stroke-width="1"/><path d="M1850 533.0 H1859" stroke="#444" stroke-width="0.8"/>
<rect x="1868" y="521" width="4" height="18" rx="2" fill="#151515"/>
<rect x="1571" y="568" width="305" height="1" fill="#dcdcdc"/>
<rect x="1605" y="550" width="13" height="13" fill="#b4b4b4"/>
<path d="M1599 576 V587 M1604 576 V587 M1596 579 H1607 M1596 584 H1607" stroke="#333" stroke-width="1.1"/>
<path d="M1816 582 Q1822 575 1828 582 Q1822 589 1816 582Z" fill="none" stroke="#555" stroke-width="1"/><circle cx="1822" cy="582" r="2.2" fill="#555"/><path d="M1816 577 L1828 587" stroke="#555" stroke-width="1"/>
<path d="M1836 581 V578 A2.5 2.5 0 0 1 1841 578 V581" fill="none" stroke="#c8c8c8" stroke-width="1.2"/><rect x="1834" y="581" width="9" height="7" fill="#c8c8c8"/>
<path d="M1851.5 581.5 V575.5 H1855.5 L1857.5 577.5 V581.5" fill="none" stroke="#c8c8c8" stroke-width="1"/><path d="M1848.5 582.5 H1860.5 V587.5 H1848.5 Z" fill="none" stroke="#c8c8c8" stroke-width="1"/><path d="M1850 585.0 H1859" stroke="#c8c8c8" stroke-width="0.8"/>
<rect x="1868" y="573" width="4" height="18" rx="2" fill="#c0c0c0"/>
</svg>
<div class="t" style="left:1602px;top:212px;font-size:12px;font-weight:bold;color:#111">Seite 1</div>
<div class="t" style="left:1629px;top:238px;font-size:11.8px;color:#111">Hilfslinien</div>
<div class="t" style="left:1629px;top:264px;font-size:12px;font-weight:normal;color:#111">Ebene 1</div>
<div class="t" style="left:1638px;top:290px;font-size:11.5px;color:#111">Kurve</div>
<div class="t" style="left:1638px;top:316px;font-size:11.5px;color:#111">Kurve</div>
<div class="t" style="left:1602px;top:342px;font-size:12px;font-weight:bold;color:#111">Seite 2</div>
<div class="t" style="left:1629px;top:368px;font-size:11.8px;color:#111">Hilfslinien</div>
<div class="t" style="left:1629px;top:394px;font-size:12px;font-weight:bold;color:#111">Ebene 1</div>
<div class="t" style="left:1638px;top:420px;font-size:11.5px;color:#111">Kurve</div>
<div class="t" style="left:1638px;top:446px;font-size:11.5px;color:#111">Kurve</div>
<div class="t" style="left:1602px;top:472px;font-size:12px;font-weight:bold;color:#111">Master-Seite</div>
<div class="t" style="left:1629px;top:498px;font-size:11.8px;color:#111">Hilfslinien (alle Seiten)</div>
<div class="t" style="left:1629px;top:524px;font-size:12px;color:#111">Desktop</div>
<div class="t" style="left:1638px;top:550px;font-size:12px;color:#c4c4c4">Bitmap</div>
<div class="t" style="left:1629px;top:576px;font-size:12px;color:#111">Dokumentgitter</div>
<div class="a" style="left:1569px;top:976px;width:309px;height:26px;background:#f2f2f2"></div>
<svg class="a" style="left:1569px;top:976px" width="309" height="27" viewBox="1569 976 309 27">
<path d="M1576 990 L1583 986.5 L1590 990 L1583 994Z" fill="#222"/><path d="M1576 987 L1583 983.5 L1586 985" fill="none" stroke="#222" stroke-width="1.1"/>
<rect x="1585" y="979" width="7" height="7" fill="#2f9e4f"/><path d="M1588.5 980 V985 M1586 982.5 H1591" stroke="#fff" stroke-width="1.1"/>
<path d="M1604 992 L1611 988.5 L1618 992 L1611 995.5Z M1604 988.5 L1611 985 L1618 988.5 M1604 985 L1611 981.5" fill="none" stroke="#222" stroke-width="1.1"/>
<rect x="1614" y="979" width="7" height="7" fill="#2f9e4f"/><path d="M1617.5 980 V985 M1615 982.5 H1620" stroke="#fff" stroke-width="1.1"/><path d="M1618 997 L1622 993 V997Z" fill="#666"/>
<rect x="1633.5" y="982" width="14" height="2" fill="#222"/><rect x="1638" y="980" width="5" height="2" fill="#222"/><path d="M1635 985 H1646 L1645 997 H1636Z" fill="#222"/><path d="M1638.5 987 V995 M1640.5 987 V995 M1642.5 987 V995" stroke="#f2f2f2" stroke-width="1"/>
<path d="M1756 988.5 H1872" stroke="#9a9a9a" stroke-width="1"/><path d="M1756.5 983 V994 M1871.5 983 V994 M1814 984 V993" stroke="#9a9a9a" stroke-width="1"/>
<rect x="1789.5" y="981.5" width="6" height="15" fill="#eee" stroke="#9a9a9a"/>
</svg>
<div class="a" style="left:1878px;top:140px;width:22px;height:863px;background:#e9e9e9"></div>
<div class="a" style="left:1878px;top:140px;width:22px;height:92px;background:#d6e9f8"></div>
<div class="a" style="left:1878px;top:232px;width:22px;height:123px;background:#dcdcdc"></div>
<div class="a" style="left:1878px;top:140px;width:1px;height:863px;background:#5ab4d2"></div>
<svg class="a" style="left:1878px;top:140px" width="22" height="240" viewBox="1878 140 22 240">
<path d="M1889 144.5 L1896 148.5 L1889 152.5 L1882 148.5Z" fill="none" stroke="#222" stroke-width="1.2"/><path d="M1882 153 L1889 149.5 L1896 153 L1889 157.5Z" fill="none" stroke="#222" stroke-width="1.2"/><path d="M1885 153 L1889 151 L1893 153 L1889 155.2Z" fill="#222"/>
<path d="M1881 241 L1886 236 L1891 241 L1886 246Z" fill="none" stroke="#222" stroke-width="1.3"/><path d="M1884 241 H1889 L1886.5 243.5Z" fill="#222"/><path d="M1893 245 V251 M1896 245 V251 M1889 248 L1893 252" stroke="#222" stroke-width="1"/>
<path d="M1889 361 V372 M1883.5 366.5 H1894.5" stroke="#b0b0b0" stroke-width="1.5"/>
</svg>
<div class="t" style="left:1889px;top:167px;font-size:12px;color:#111;transform-origin:0 0;transform:rotate(90deg) translate(0,-6px)">Objekte</div>
<div class="t" style="left:1889px;top:259px;font-size:11.6px;color:#111;transform-origin:0 0;transform:rotate(90deg) translate(0,-6px)">Eigenschaften</div>
<div class="a" style="left:1900px;top:117px;width:20px;height:886px;background:#f2f2f2"></div>
<svg class="a" style="left:1900px;top:117px" width="20" height="886" viewBox="1900 117 20 886">
<path d="M1902 121 H1918 M1902 123.5 H1918" stroke="#bbb" stroke-width="1" stroke-dasharray="1 2"/>
<path d="M1908 132 L1912 135.5 L1908 139Z" fill="#555"/>
<path d="M1903.5 161 L1904.3 158.3 L1911.5 151 L1913.5 153 L1906.3 160.3Z" fill="#c09070" stroke="#333" stroke-width="0.9"/><path d="M1910.5 149.5 L1915 154" stroke="#222" stroke-width="1.4"/><path d="M1912 150.5 L1914.5 148 Q1916 146.5 1917.5 148 Q1919 149.5 1917.5 151 L1915 153.5Z" fill="#222"/>
<path d="M1906 175 L1910 171 L1914 175" fill="none" stroke="#c8c8c8" stroke-width="1.5"/>
<rect x="1901.5" y="182.5" width="17" height="17" fill="#fff" stroke="#444" stroke-width="1"/><path d="M1903 198.0 L1917 184.0" stroke="#c06060" stroke-width="1"/>
<rect x="1901.5" y="199.5" width="17" height="17" fill="#151515" stroke="#9a9a9a" stroke-width="0.6"/>
<rect x="1901.5" y="216.5" width="17" height="17" fill="#363636" stroke="#9a9a9a" stroke-width="0.6"/>
<rect x="1901.5" y="233.5" width="17" height="17" fill="#4d4d4d" stroke="#9a9a9a" stroke-width="0.6"/>
<rect x="1901.5" y="250.5" width="17" height="17" fill="#666666" stroke="#9a9a9a" stroke-width="0.6"/>
<rect x="1901.5" y="267.5" width="17" height="17" fill="#808080" stroke="#9a9a9a" stroke-width="0.6"/>
<rect x="1901.5" y="284.5" width="17" height="17" fill="#999999" stroke="#9a9a9a" stroke-width="0.6"/>
<rect x="1901.5" y="301.5" width="17" height="17" fill="#b3b3b3" stroke="#9a9a9a" stroke-width="0.6"/>
<rect x="1901.5" y="318.5" width="17" height="17" fill="#cccccc" stroke="#9a9a9a" stroke-width="0.6"/>
<rect x="1901.5" y="335.5" width="17" height="17" fill="#e6e6e6" stroke="#9a9a9a" stroke-width="0.6"/>
<rect x="1901.5" y="352.5" width="17" height="17" fill="#f2f2f2" stroke="#9a9a9a" stroke-width="0.6"/>
<rect x="1901.5" y="369.5" width="17" height="17" fill="#ffffff" stroke="#9a9a9a" stroke-width="0.6"/>
<rect x="1901.5" y="386.5" width="17" height="17" fill="#2e3192" stroke="#9a9a9a" stroke-width="0.6"/>
<rect x="1901.5" y="403.5" width="17" height="17" fill="#00a0e3" stroke="#9a9a9a" stroke-width="0.6"/>
<rect x="1901.5" y="420.5" width="17" height="17" fill="#00a651" stroke="#9a9a9a" stroke-width="0.6"/>
<rect x="1901.5" y="437.5" width="17" height="17" fill="#ffe500" stroke="#9a9a9a" stroke-width="0.6"/>
<rect x="1901.5" y="454.5" width="17" height="17" fill="#ed1c24" stroke="#9a9a9a" stroke-width="0.6"/>
<rect x="1901.5" y="471.5" width="17" height="17" fill="#ec008c" stroke="#9a9a9a" stroke-width="0.6"/>
<rect x="1901.5" y="488.5" width="17" height="17" fill="#b0438f" stroke="#9a9a9a" stroke-width="0.6"/>
<rect x="1901.5" y="505.5" width="17" height="17" fill="#f7941d" stroke="#9a9a9a" stroke-width="0.6"/><rect x="1902.5" y="506.5" width="15" height="15" fill="none" stroke="#fff" stroke-width="1.2"/>
<rect x="1901.5" y="522.5" width="17" height="17" fill="#f9b5b8" stroke="#9a9a9a" stroke-width="0.6"/>
<rect x="1901.5" y="539.5" width="17" height="17" fill="#7d6b63" stroke="#9a9a9a" stroke-width="0.6"/>
<rect x="1901.5" y="556.5" width="17" height="17" fill="#d8d4f0" stroke="#9a9a9a" stroke-width="0.6"/>
<rect x="1901.5" y="573.5" width="17" height="17" fill="#a99cd9" stroke="#9a9a9a" stroke-width="0.6"/>
<rect x="1901.5" y="590.5" width="17" height="17" fill="#7b90d0" stroke="#9a9a9a" stroke-width="0.6"/>
<rect x="1901.5" y="607.5" width="17" height="17" fill="#8068c6" stroke="#9a9a9a" stroke-width="0.6"/>
<rect x="1901.5" y="624.5" width="17" height="17" fill="#8b89b2" stroke="#9a9a9a" stroke-width="0.6"/>
<rect x="1901.5" y="641.5" width="17" height="17" fill="#4b5f8c" stroke="#9a9a9a" stroke-width="0.6"/>
<rect x="1901.5" y="658.5" width="17" height="17" fill="#4f4e6b" stroke="#9a9a9a" stroke-width="0.6"/>
<rect x="1901.5" y="675.5" width="17" height="17" fill="#6b7b92" stroke="#9a9a9a" stroke-width="0.6"/>
<rect x="1901.5" y="692.5" width="17" height="17" fill="#1591d0" stroke="#9a9a9a" stroke-width="0.6"/>
<rect x="1901.5" y="709.5" width="17" height="17" fill="#b9d9f1" stroke="#9a9a9a" stroke-width="0.6"/>
<rect x="1901.5" y="726.5" width="17" height="17" fill="#c1c8d1" stroke="#9a9a9a" stroke-width="0.6"/>
<rect x="1901.5" y="743.5" width="17" height="17" fill="#96a0a9" stroke="#9a9a9a" stroke-width="0.6"/>
<rect x="1901.5" y="760.5" width="17" height="17" fill="#6a7880" stroke="#9a9a9a" stroke-width="0.6"/>
<rect x="1901.5" y="777.5" width="17" height="17" fill="#3e4849" stroke="#9a9a9a" stroke-width="0.6"/>
<rect x="1901.5" y="794.5" width="17" height="17" fill="#4b6a62" stroke="#9a9a9a" stroke-width="0.6"/>
<rect x="1901.5" y="811.5" width="17" height="17" fill="#3b8069" stroke="#9a9a9a" stroke-width="0.6"/>
<rect x="1901.5" y="828.5" width="17" height="17" fill="#6b8b89" stroke="#9a9a9a" stroke-width="0.6"/>
<rect x="1901.5" y="845.5" width="17" height="17" fill="#4aa191" stroke="#9a9a9a" stroke-width="0.6"/>
<rect x="1901.5" y="862.5" width="17" height="17" fill="#5a9b6b" stroke="#9a9a9a" stroke-width="0.6"/>
<rect x="1901.5" y="879.5" width="17" height="17" fill="#72c9d9" stroke="#9a9a9a" stroke-width="0.6"/>
<rect x="1901.5" y="896.5" width="17" height="17" fill="#5a99a9" stroke="#9a9a9a" stroke-width="0.6"/>
<rect x="1901.5" y="913.5" width="17" height="17" fill="#b9c9b9" stroke="#9a9a9a" stroke-width="0.6"/>
<rect x="1901.5" y="930.5" width="17" height="17" fill="#dbf2db" stroke="#9a9a9a" stroke-width="0.6"/>
<rect x="1901.5" y="947.5" width="17" height="17" fill="#abe8ab" stroke="#9a9a9a" stroke-width="0.6"/>
<path d="M1905 969 L1910 974 L1915 969" fill="none" stroke="#a0a0a0" stroke-width="1.5"/>
<path d="M1904 983 L1908 987 L1904 991 M1909 983 L1913 987 L1909 991" fill="none" stroke="#a8a8a8" stroke-width="1.3"/>
</svg>
</body></html>
